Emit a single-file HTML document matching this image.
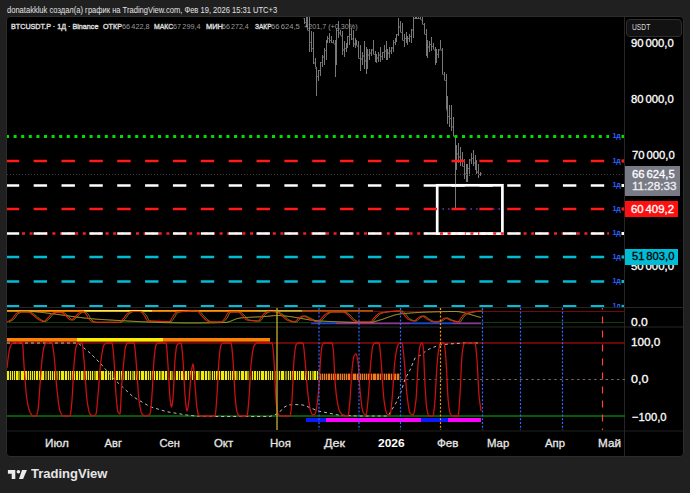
<!DOCTYPE html>
<html><head><meta charset="utf-8"><style>
*{margin:0;padding:0;box-sizing:border-box}
body{width:690px;height:493px;background:#202020;overflow:hidden;position:relative;font-family:"Liberation Sans",sans-serif;color:#fff}
.chart{position:absolute;left:6px;top:16px;width:678px;height:441px;background:#000;border:1px solid #2c2c2c;border-radius:4px}
.tx{position:absolute;white-space:pre;line-height:1;transform-origin:0 0}
.box{position:absolute;left:625px}
</style></head><body>
<div class="chart"></div>
<svg width="690" height="493" style="position:absolute;left:0;top:0">
<defs><clipPath id="main"><rect x="7" y="17" width="618" height="290"/></clipPath>
<clipPath id="p1"><rect x="7" y="308" width="618" height="19"/></clipPath>
<clipPath id="p2"><rect x="7" y="328" width="618" height="102"/></clipPath></defs>
<g clip-path="url(#main)">
<rect x="437.2" y="185.3" width="65.2" height="48.3" fill="none" stroke="#ffffff" stroke-width="2.7"/>
<path d="M304.5 18V24M303.5 18.5h1M304.5 22.5h1M306.5 17V27M305.5 22.5h1M306.5 24.5h1M307.5 17V30M306.5 24.5h1M307.5 30.5h1M309.5 17V52M308.5 30.5h1M309.5 42.5h1M311.5 31V52M310.5 42.5h1M311.5 48.5h1M313.5 32V64M312.5 48.5h1M313.5 62.5h1M315.5 58V67M314.5 63.5h1M315.5 67.5h1M316.5 67V96M315.5 68.5h1M316.5 76.5h1M318.5 70V81M317.5 76.5h1M318.5 70.5h1M320.5 62V76M319.5 70.5h1M320.5 62.5h1M322.5 55V67M321.5 62.5h1M322.5 56.5h1M324.5 48V65M323.5 57.5h1M324.5 50.5h1M326.5 40V60M325.5 50.5h1M326.5 40.5h1M327.5 36V43M326.5 40.5h1M327.5 38.5h1M329.5 33V43M328.5 38.5h1M329.5 40.5h1M331.5 36V43M330.5 40.5h1M331.5 42.5h1M333.5 40V43M332.5 42.5h1M333.5 43.5h1M335.5 40V77M334.5 44.5h1M335.5 46.5h1M336.5 28V65M335.5 47.5h1M336.5 30.5h1M338.5 21V38M337.5 30.5h1M338.5 32.5h1M340.5 30V35M339.5 33.5h1M340.5 35.5h1M342.5 31V55M341.5 36.5h1M342.5 49.5h1M344.5 41V57M343.5 50.5h1M344.5 48.5h1M346.5 43V52M345.5 48.5h1M346.5 43.5h1M347.5 36V48M346.5 44.5h1M347.5 36.5h1M349.5 19V45M348.5 36.5h1M349.5 34.5h1M351.5 28V40M350.5 34.5h1M351.5 38.5h1M353.5 30V47M352.5 39.5h1M353.5 43.5h1M355.5 38V48M354.5 44.5h1M355.5 42.5h1M356.5 40V45M355.5 43.5h1M356.5 45.5h1M358.5 41V58M357.5 46.5h1M358.5 58.5h1M360.5 45V71M359.5 58.5h1M360.5 58.5h1M362.5 52V65M361.5 59.5h1M362.5 55.5h1M364.5 41V69M363.5 56.5h1M364.5 60.5h1M366.5 47V74M365.5 61.5h1M366.5 59.5h1M367.5 49V69M366.5 60.5h1M367.5 54.5h1M369.5 49V60M368.5 55.5h1M369.5 52.5h1M371.5 49V56M370.5 53.5h1M371.5 49.5h1M373.5 40V54M372.5 50.5h1M373.5 54.5h1M375.5 51V62M374.5 54.5h1M375.5 58.5h1M376.5 54V63M375.5 59.5h1M376.5 57.5h1M378.5 52V62M377.5 58.5h1M378.5 54.5h1M380.5 47V62M379.5 55.5h1M380.5 56.5h1M382.5 52V60M381.5 56.5h1M382.5 52.5h1M384.5 45V58M383.5 52.5h1M384.5 50.5h1M386.5 41V60M385.5 51.5h1M386.5 54.5h1M387.5 49V60M386.5 55.5h1M387.5 52.5h1M389.5 47V58M388.5 53.5h1M389.5 50.5h1M391.5 47V54M390.5 51.5h1M391.5 47.5h1M393.5 40V52M392.5 48.5h1M393.5 42.5h1M395.5 38V45M394.5 42.5h1M395.5 38.5h1M396.5 34V42M395.5 38.5h1M396.5 34.5h1M398.5 18V36M397.5 34.5h1M398.5 26.5h1M400.5 21V32M399.5 27.5h1M400.5 32.5h1M402.5 23V40M401.5 32.5h1M402.5 40.5h1M404.5 34V47M403.5 40.5h1M404.5 38.5h1M406.5 32V43M405.5 38.5h1M406.5 40.5h1M407.5 36V45M406.5 41.5h1M407.5 38.5h1M409.5 34V42M408.5 38.5h1M409.5 36.5h1M411.5 29V43M410.5 36.5h1M411.5 29.5h1M413.5 17V38M412.5 30.5h1M413.5 18.5h1M415.5 17V19M414.5 18.5h1M415.5 18.5h1M416.5 17V19M415.5 18.5h1M416.5 18.5h1M418.5 17V19M417.5 18.5h1M418.5 18.5h1M420.5 17V19M419.5 18.5h1M420.5 19.5h1M422.5 17V24M421.5 20.5h1M422.5 24.5h1M424.5 23V34M423.5 24.5h1M424.5 34.5h1M426.5 29V56M425.5 34.5h1M426.5 49.5h1M427.5 40V58M426.5 50.5h1M427.5 46.5h1M429.5 41V52M428.5 47.5h1M429.5 44.5h1M431.5 37V51M430.5 44.5h1M431.5 46.5h1M433.5 43V49M432.5 46.5h1M433.5 49.5h1M435.5 47V65M434.5 50.5h1M435.5 56.5h1M436.5 49V63M435.5 56.5h1M436.5 54.5h1M438.5 49V58M437.5 54.5h1M438.5 49.5h1M440.5 40V49M439.5 50.5h1M440.5 49.5h1M442.5 48V74M441.5 50.5h1M442.5 74.5h1M444.5 72V80M443.5 74.5h1M444.5 80.5h1M446.5 74V109M445.5 80.5h1M446.5 109.5h1M447.5 96V124M446.5 110.5h1M447.5 116.5h1M449.5 105V127M448.5 116.5h1M449.5 118.5h1M451.5 105V131M450.5 118.5h1M451.5 126.5h1M453.5 117V136M452.5 127.5h1M453.5 136.5h1M455.5 136V210M454.5 136.5h1M455.5 158.5h1M456.5 145V170M455.5 158.5h1M456.5 153.5h1M458.5 143V163M457.5 154.5h1M458.5 156.5h1M460.5 147V166M459.5 157.5h1M460.5 159.5h1M462.5 152V166M461.5 160.5h1M462.5 166.5h1M464.5 159V179M463.5 166.5h1M464.5 173.5h1M466.5 164V182M465.5 174.5h1M466.5 173.5h1M467.5 164V182M466.5 174.5h1M467.5 168.5h1M469.5 159V176M468.5 168.5h1M469.5 159.5h1M471.5 153V164M470.5 160.5h1M471.5 158.5h1M473.5 150V166M472.5 158.5h1M473.5 162.5h1M475.5 155V170M474.5 163.5h1M475.5 167.5h1M476.5 160V174M475.5 168.5h1M476.5 171.5h1M478.5 164V178M477.5 172.5h1M478.5 174.5h1M480.5 172V176M479.5 174.5h1M480.5 173.5h1" stroke="#787878" stroke-width="1" fill="none"/>
<line x1="7" y1="174.5" x2="625" y2="174.5" stroke="#3a3a3a" stroke-width="1" stroke-dasharray="1 2" stroke-dashoffset="0"/><line x1="6" y1="136.5" x2="625" y2="136.5" stroke="#00e000" stroke-width="3" stroke-dasharray="3 4.6" stroke-dashoffset="0"/><line x1="7" y1="161" x2="625" y2="161" stroke="#ff1a1a" stroke-width="2.6" stroke-dasharray="13.4 14.457" stroke-dashoffset="1.2"/><line x1="442.4" y1="209" x2="502" y2="209" stroke="#7b2fbf" stroke-width="1.5" stroke-dasharray="1.6 4" stroke-dashoffset="0"/><line x1="7" y1="185.5" x2="625" y2="185.5" stroke="#ffffff" stroke-width="2.6" stroke-dasharray="13.4 14.457" stroke-dashoffset="1.2"/><line x1="7" y1="209" x2="625" y2="209" stroke="#ff1a1a" stroke-width="2.6" stroke-dasharray="13.4 14.457" stroke-dashoffset="1.2"/><line x1="22" y1="233.5" x2="625" y2="233.5" stroke="#ff1a1a" stroke-width="2.6" stroke-dasharray="3 4.6" stroke-dashoffset="0"/><line x1="7" y1="233.5" x2="625" y2="233.5" stroke="#ffffff" stroke-width="2.6" stroke-dasharray="13.4 14.457" stroke-dashoffset="1.2"/><line x1="7" y1="257" x2="625" y2="257" stroke="#00bcd4" stroke-width="2.6" stroke-dasharray="13.4 14.457" stroke-dashoffset="1.2"/><line x1="7" y1="281.5" x2="625" y2="281.5" stroke="#00bcd4" stroke-width="2.6" stroke-dasharray="13.4 14.457" stroke-dashoffset="1.2"/><line x1="7" y1="306.4" x2="625" y2="306.4" stroke="#00bcd4" stroke-width="2.6" stroke-dasharray="13.4 14.457" stroke-dashoffset="1.2"/>
<rect x="609" y="131.5" width="13" height="10" fill="#000"/><text x="612.4" y="138.2" font-size="7" font-weight="bold" fill="#3060ff" font-family="Liberation Sans">1д</text><rect x="609" y="156" width="13" height="10" fill="#000"/><text x="612.4" y="162.7" font-size="7" font-weight="bold" fill="#3060ff" font-family="Liberation Sans">1д</text><rect x="609" y="180.5" width="13" height="10" fill="#000"/><text x="612.4" y="187.2" font-size="7" font-weight="bold" fill="#3060ff" font-family="Liberation Sans">1д</text><rect x="609" y="204" width="13" height="10" fill="#000"/><text x="612.4" y="210.7" font-size="7" font-weight="bold" fill="#3060ff" font-family="Liberation Sans">1д</text><rect x="609" y="228.5" width="13" height="10" fill="#000"/><text x="612.4" y="235.2" font-size="7" font-weight="bold" fill="#3060ff" font-family="Liberation Sans">1д</text><rect x="609" y="252" width="13" height="10" fill="#000"/><text x="612.4" y="258.7" font-size="7" font-weight="bold" fill="#3060ff" font-family="Liberation Sans">1д</text><rect x="609" y="276.5" width="13" height="10" fill="#000"/><text x="612.4" y="283.2" font-size="7" font-weight="bold" fill="#3060ff" font-family="Liberation Sans">1д</text><rect x="609" y="301.4" width="13" height="10" fill="#000"/><text x="612.4" y="308.09999999999997" font-size="7" font-weight="bold" fill="#3060ff" font-family="Liberation Sans">1д</text><rect x="621.5" y="135.0" width="3" height="3" fill="#00e000"/><rect x="621.5" y="159.5" width="3" height="3" fill="#ff1a1a"/><rect x="621.5" y="184.0" width="3" height="3" fill="#ffffff"/><rect x="621.5" y="207.5" width="3" height="3" fill="#ff1a1a"/><rect x="621.5" y="232.0" width="3" height="3" fill="#ffffff"/><rect x="621.5" y="255.5" width="3" height="3" fill="#00bcd4"/><rect x="621.5" y="280.0" width="3" height="3" fill="#00bcd4"/><rect x="621.5" y="304.9" width="3" height="3" fill="#00bcd4"/>
</g>
<line x1="7" y1="307.5" x2="683" y2="307.5" stroke="#262626" stroke-width="1"/>
<line x1="7" y1="327" x2="683" y2="327" stroke="#262626" stroke-width="1"/>
<line x1="7" y1="431" x2="683" y2="431" stroke="#202020" stroke-width="1"/>
<line x1="624.5" y1="17" x2="624.5" y2="456" stroke="#262626" stroke-width="1"/>
<g clip-path="url(#p1)">
<line x1="7" y1="311.5" x2="625" y2="311.5" stroke="#6e0a0a" stroke-width="1"/>
<line x1="7" y1="322.5" x2="625" y2="322.5" stroke="#0a420a" stroke-width="1"/>
<line x1="7" y1="310.8" x2="84" y2="310.8" stroke="#ff9800" stroke-width="1.8"/>
<line x1="84" y1="310.8" x2="152" y2="310.8" stroke="#ffeb3b" stroke-width="1.8"/>
<line x1="152" y1="310.8" x2="257" y2="310.8" stroke="#ff9800" stroke-width="1.8"/>
<line x1="257" y1="310.8" x2="302" y2="310.8" stroke="#c8b428" stroke-width="1.8"/>
<line x1="302" y1="310.8" x2="373" y2="310.8" stroke="#b4500a" stroke-width="1.8"/>
<line x1="311" y1="323.5" x2="336" y2="323.5" stroke="#1a3cff" stroke-width="1.5"/>
<line x1="336" y1="323.5" x2="410" y2="323.5" stroke="#9c27b0" stroke-width="1.5"/>
<line x1="410" y1="323.5" x2="453" y2="323.5" stroke="#1a3cff" stroke-width="1.5"/>
<line x1="453" y1="323.5" x2="481" y2="323.5" stroke="#9c27b0" stroke-width="1.5"/>
<polyline points="7.0,310.5 7.5,310.5 8.0,310.5 8.5,310.5 9.0,310.6 9.5,310.6 10.0,310.6 10.5,310.6 11.0,310.6 11.5,310.6 12.0,310.6 12.5,310.6 13.0,310.7 13.5,310.7 14.0,310.7 14.5,310.7 15.0,310.7 15.5,310.7 16.0,310.7 16.5,310.8 17.0,310.8 17.5,310.8 18.0,310.8 18.5,310.8 19.0,310.8 19.5,310.8 20.0,310.9 20.5,310.9 21.0,310.9 21.5,310.9 22.0,310.9 22.5,310.9 23.0,311.0 23.5,311.0 24.0,311.0 24.5,311.0 25.0,311.0 25.5,311.1 26.0,311.1 26.5,311.1 27.0,311.1 27.5,311.2 28.0,311.2 28.5,311.2 29.0,311.3 29.5,311.3 30.0,311.3 30.5,311.4 31.0,311.4 31.5,311.4 32.0,311.5 32.5,311.5 33.0,311.6 33.5,311.6 34.0,311.6 34.5,311.7 35.0,311.7 35.5,311.8 36.0,311.8 36.5,311.9 37.0,311.9 37.5,312.0 38.0,312.0 38.5,312.1 39.0,312.1 39.5,312.2 40.0,312.2 40.5,312.3 41.0,312.3 41.5,312.4 42.0,312.4 42.5,312.5 43.0,312.5 43.5,312.6 44.0,312.7 44.5,312.7 45.0,312.8 45.5,312.8 46.0,312.9 46.5,313.0 47.0,313.0 47.5,313.1 48.0,313.1 48.5,313.2 49.0,313.3 49.5,313.3 50.0,313.4 50.5,313.5 51.0,313.5 51.5,313.6 52.0,313.7 52.5,313.7 53.0,313.8 53.5,313.9 54.0,313.9 54.5,314.0 55.0,314.1 55.5,314.1 56.0,314.2 56.5,314.3 57.0,314.3 57.5,314.4 58.0,314.5 58.5,314.5 59.0,314.6 59.5,314.7 60.0,314.7 60.5,314.8 61.0,314.9 61.5,315.0 62.0,315.0 62.5,315.1 63.0,315.2 63.5,315.2 64.0,315.3 64.5,315.4 65.0,315.4 65.5,315.5 66.0,315.6 66.5,315.7 67.0,315.7 67.5,315.8 68.0,315.9 68.5,315.9 69.0,316.0 69.5,316.1 70.0,316.1 70.5,316.2 71.0,316.3 71.5,316.4 72.0,316.4 72.5,316.5 73.0,316.6 73.5,316.6 74.0,316.7 74.5,316.8 75.0,316.8 75.5,316.9 76.0,317.0 76.5,317.0 77.0,317.1 77.5,317.2 78.0,317.2 78.5,317.3 79.0,317.3 79.5,317.4 80.0,317.5 80.5,317.5 81.0,317.6 81.5,317.7 82.0,317.7 82.5,317.8 83.0,317.8 83.5,317.9 84.0,318.0 84.5,318.0 85.0,318.1 85.5,318.1 86.0,318.2 86.5,318.2 87.0,318.3 87.5,318.3 88.0,318.4 88.5,318.4 89.0,318.5 89.5,318.6 90.0,318.6 90.5,318.6 91.0,318.7 91.5,318.7 92.0,318.8 92.5,318.8 93.0,318.9 93.5,318.9 94.0,319.0 94.5,319.0 95.0,319.0 95.5,319.1 96.0,319.1 96.5,319.2 97.0,319.2 97.5,319.2 98.0,319.3 98.5,319.3 99.0,319.3 99.5,319.4 100.0,319.4 100.5,319.4 101.0,319.5 101.5,319.5 102.0,319.5 102.5,319.5 103.0,319.6 103.5,319.6 104.0,319.6 104.5,319.7 105.0,319.7 105.5,319.7 106.0,319.8 106.5,319.8 107.0,319.8 107.5,319.8 108.0,319.9 108.5,319.9 109.0,319.9 109.5,320.0 110.0,320.0 110.5,320.0 111.0,320.1 111.5,320.1 112.0,320.1 112.5,320.1 113.0,320.2 113.5,320.2 114.0,320.2 114.5,320.3 115.0,320.3 115.5,320.3 116.0,320.3 116.5,320.4 117.0,320.4 117.5,320.4 118.0,320.5 118.5,320.5 119.0,320.5 119.5,320.5 120.0,320.6 120.5,320.6 121.0,320.6 121.5,320.7 122.0,320.7 122.5,320.7 123.0,320.7 123.5,320.8 124.0,320.8 124.5,320.8 125.0,320.9 125.5,320.9 126.0,320.9 126.5,320.9 127.0,321.0 127.5,321.0 128.0,321.0 128.5,321.0 129.0,321.1 129.5,321.1 130.0,321.1 130.5,321.2 131.0,321.2 131.5,321.2 132.0,321.2 132.5,321.3 133.0,321.3 133.5,321.3 134.0,321.3 134.5,321.4 135.0,321.4 135.5,321.4 136.0,321.4 136.5,321.5 137.0,321.5 137.5,321.5 138.0,321.5 138.5,321.6 139.0,321.6 139.5,321.6 140.0,321.6 140.5,321.7 141.0,321.7 141.5,321.7 142.0,321.7 142.5,321.8 143.0,321.8 143.5,321.8 144.0,321.8 144.5,321.8 145.0,321.9 145.5,321.9 146.0,321.9 146.5,321.9 147.0,322.0 147.5,322.0 148.0,322.0 148.5,322.0 149.0,322.0 149.5,322.1 150.0,322.1 150.5,322.1 151.0,322.1 151.5,322.1 152.0,322.2 152.5,322.2 153.0,322.2 153.5,322.2 154.0,322.2 154.5,322.3 155.0,322.3 155.5,322.3 156.0,322.3 156.5,322.3 157.0,322.4 157.5,322.4 158.0,322.4 158.5,322.4 159.0,322.4 159.5,322.4 160.0,322.5 160.5,322.5 161.0,322.5 161.5,322.5 162.0,322.5 162.5,322.5 163.0,322.6 163.5,322.6 164.0,322.6 164.5,322.6 165.0,322.6 165.5,322.6 166.0,322.6 166.5,322.7 167.0,322.7 167.5,322.7 168.0,322.7 168.5,322.7 169.0,322.7 169.5,322.7 170.0,322.8 170.5,322.8 171.0,322.8 171.5,322.8 172.0,322.8 172.5,322.8 173.0,322.8 173.5,322.8 174.0,322.8 174.5,322.8 175.0,322.9 175.5,322.9 176.0,322.9 176.5,322.9 177.0,322.9 177.5,322.9 178.0,322.9 178.5,322.9 179.0,322.9 179.5,322.9 180.0,322.9 180.5,322.9 181.0,322.9 181.5,323.0 182.0,323.0 182.5,323.0 183.0,323.0 183.5,323.0 184.0,323.0 184.5,323.0 185.0,323.0 185.5,323.0 186.0,323.0 186.5,323.0 187.0,323.0 187.5,323.0 188.0,323.0 188.5,323.0 189.0,323.0 189.5,323.0 190.0,323.0 190.5,323.0 191.0,323.0 191.5,323.0 192.0,323.0 192.5,323.0 193.0,323.0 193.5,323.0 194.0,323.0 194.5,323.0 195.0,323.0 195.5,323.0 196.0,323.0 196.5,323.0 197.0,323.0 197.5,323.0 198.0,323.0 198.5,323.0 199.0,323.0 199.5,323.0 200.0,323.0 200.5,323.0 201.0,323.0 201.5,323.0 202.0,322.9 202.5,322.9 203.0,322.9 203.5,322.9 204.0,322.9 204.5,322.9 205.0,322.9 205.5,322.9 206.0,322.9 206.5,322.9 207.0,322.9 207.5,322.9 208.0,322.9 208.5,322.9 209.0,322.9 209.5,322.9 210.0,322.8 210.5,322.8 211.0,322.8 211.5,322.8 212.0,322.8 212.5,322.8 213.0,322.8 213.5,322.8 214.0,322.8 214.5,322.8 215.0,322.8 215.5,322.7 216.0,322.7 216.5,322.7 217.0,322.7 217.5,322.7 218.0,322.7 218.5,322.7 219.0,322.7 219.5,322.7 220.0,322.6 220.5,322.6 221.0,322.6 221.5,322.6 222.0,322.6 222.5,322.6 223.0,322.6 223.5,322.5 224.0,322.5 224.5,322.5 225.0,322.5 225.5,322.5 226.0,322.4 226.5,322.4 227.0,322.3 227.5,322.1 228.0,322.0 228.5,321.9 229.0,321.7 229.5,321.6 230.0,321.4 230.5,321.2 231.0,321.0 231.5,320.8 232.0,320.6 232.5,320.4 233.0,320.2 233.5,320.0 234.0,319.8 234.5,319.6 235.0,319.4 235.5,319.2 236.0,319.0 236.5,318.8 237.0,318.7 237.5,318.5 238.0,318.4 238.5,318.3 239.0,318.1 239.5,318.1 240.0,318.0 240.5,317.9 241.0,317.9 241.5,317.8 242.0,317.8 242.5,317.8 243.0,317.7 243.5,317.7 244.0,317.6 244.5,317.6 245.0,317.6 245.5,317.5 246.0,317.5 246.5,317.5 247.0,317.4 247.5,317.4 248.0,317.4 248.5,317.3 249.0,317.3 249.5,317.3 250.0,317.3 250.5,317.2 251.0,317.2 251.5,317.2 252.0,317.2 252.5,317.1 253.0,317.1 253.5,317.1 254.0,317.1 254.5,317.0 255.0,317.0 255.5,317.0 256.0,317.0 256.5,317.0 257.0,316.9 257.5,316.9 258.0,316.9 258.5,316.9 259.0,316.8 259.5,316.8 260.0,316.8 260.5,316.8 261.0,316.7 261.5,316.7 262.0,316.7 262.5,316.7 263.0,316.6 263.5,316.6 264.0,316.6 264.5,316.5 265.0,316.5 265.5,316.5 266.0,316.4 266.5,316.4 267.0,316.3 267.5,316.3 268.0,316.2 268.5,316.2 269.0,316.1 269.5,316.1 270.0,316.0 270.5,316.0 271.0,315.9 271.5,315.9 272.0,315.8 272.5,315.8 273.0,315.7 273.5,315.7 274.0,315.7 274.5,315.6 275.0,315.6 275.5,315.6 276.0,315.5 276.5,315.5 277.0,315.5 277.5,315.5 278.0,315.5 278.5,315.5 279.0,315.5 279.5,315.5 280.0,315.6 280.5,315.6 281.0,315.6 281.5,315.7 282.0,315.7 282.5,315.8 283.0,315.8 283.5,315.9 284.0,315.9 284.5,316.0 285.0,316.0 285.5,316.0 286.0,316.1 286.5,316.1 287.0,316.2 287.5,316.3 288.0,316.3 288.5,316.4 289.0,316.4 289.5,316.5 290.0,316.6 290.5,316.6 291.0,316.7 291.5,316.8 292.0,316.9 292.5,316.9 293.0,317.0 293.5,317.1 294.0,317.2 294.5,317.3 295.0,317.3 295.5,317.4 296.0,317.5 296.5,317.6 297.0,317.7 297.5,317.8 298.0,317.9 298.5,317.9 299.0,318.0 299.5,318.1 300.0,318.2 300.5,318.3 301.0,318.4 301.5,318.5 302.0,318.6 302.5,318.7 303.0,318.8 303.5,318.8 304.0,318.9 304.5,319.0 305.0,319.1 305.5,319.2 306.0,319.3 306.5,319.4 307.0,319.4 307.5,319.5 308.0,319.6 308.5,319.7 309.0,319.8 309.5,319.9 310.0,319.9 310.5,320.0 311.0,320.1 311.5,320.1 312.0,320.2 312.5,320.3 313.0,320.3 313.5,320.4 314.0,320.5 314.5,320.5 315.0,320.6 315.5,320.6 316.0,320.7 316.5,320.7 317.0,320.8 317.5,320.8 318.0,320.9 318.5,320.9 319.0,320.9 319.5,321.0 320.0,321.0 320.5,321.0 321.0,321.1 321.5,321.1 322.0,321.1 322.5,321.1 323.0,321.2 323.5,321.2 324.0,321.2 324.5,321.2 325.0,321.3 325.5,321.3 326.0,321.3 326.5,321.3 327.0,321.3 327.5,321.4 328.0,321.4 328.5,321.4 329.0,321.4 329.5,321.5 330.0,321.5 330.5,321.5 331.0,321.5 331.5,321.6 332.0,321.6 332.5,321.6 333.0,321.6 333.5,321.6 334.0,321.7 334.5,321.7 335.0,321.7 335.5,321.7 336.0,321.7 336.5,321.8 337.0,321.8 337.5,321.8 338.0,321.8 338.5,321.8 339.0,321.9 339.5,321.9 340.0,321.9 340.5,321.9 341.0,321.9 341.5,322.0 342.0,322.0 342.5,322.0 343.0,322.0 343.5,322.0 344.0,322.0 344.5,322.1 345.0,322.1 345.5,322.1 346.0,322.1 346.5,322.1 347.0,322.1 347.5,322.1 348.0,322.2 348.5,322.2 349.0,322.2 349.5,322.2 350.0,322.2 350.5,322.2 351.0,322.2 351.5,322.3 352.0,322.3 352.5,322.3 353.0,322.3 353.5,322.3 354.0,322.3 354.5,322.3 355.0,322.3 355.5,322.3 356.0,322.4 356.5,322.4 357.0,322.4 357.5,322.4 358.0,322.4 358.5,322.4 359.0,322.4 359.5,322.4 360.0,322.4 360.5,322.4 361.0,322.4 361.5,322.4 362.0,322.5 362.5,322.5 363.0,322.5 363.5,322.5 364.0,322.5 364.5,322.5 365.0,322.5 365.5,322.5 366.0,322.5 366.5,322.5 367.0,322.5 367.5,322.5 368.0,322.5 368.5,322.5 369.0,322.5 369.5,322.5 370.0,322.5 370.5,322.5 371.0,322.5 371.5,322.4 372.0,322.3 372.5,322.2 373.0,322.1 373.5,322.0 374.0,321.9 374.5,321.7 375.0,321.6 375.5,321.4 376.0,321.3 376.5,321.1 377.0,320.9 377.5,320.8 378.0,320.6 378.5,320.4 379.0,320.3 379.5,320.1 380.0,320.0 380.5,319.9 381.0,319.7 381.5,319.6 382.0,319.4 382.5,319.3 383.0,319.1 383.5,318.9 384.0,318.8 384.5,318.6 385.0,318.4 385.5,318.2 386.0,318.1 386.5,317.9 387.0,317.7 387.5,317.5 388.0,317.3 388.5,317.1 389.0,317.0 389.5,316.8 390.0,316.6 390.5,316.4 391.0,316.3 391.5,316.1 392.0,315.9 392.5,315.8 393.0,315.6 393.5,315.4 394.0,315.3 394.5,315.1 395.0,315.0 395.5,314.9 396.0,314.7 396.5,314.6 397.0,314.5 397.5,314.4 398.0,314.3 398.5,314.2 399.0,314.1 399.5,314.1 400.0,314.0 400.5,313.9 401.0,313.9 401.5,313.8 402.0,313.8 402.5,313.7 403.0,313.7 403.5,313.6 404.0,313.6 404.5,313.5 405.0,313.5 405.5,313.4 406.0,313.4 406.5,313.3 407.0,313.3 407.5,313.2 408.0,313.2 408.5,313.2 409.0,313.1 409.5,313.1 410.0,313.0 410.5,313.0 411.0,313.0 411.5,312.9 412.0,312.9 412.5,312.9 413.0,312.8 413.5,312.8 414.0,312.8 414.5,312.7 415.0,312.7 415.5,312.7 416.0,312.6 416.5,312.6 417.0,312.6 417.5,312.5 418.0,312.5 418.5,312.5 419.0,312.5 419.5,312.4 420.0,312.4 420.5,312.4 421.0,312.4 421.5,312.3 422.0,312.3 422.5,312.3 423.0,312.3 423.5,312.2 424.0,312.2 424.5,312.2 425.0,312.2 425.5,312.2 426.0,312.1 426.5,312.1 427.0,312.1 427.5,312.1 428.0,312.1 428.5,312.0 429.0,312.0 429.5,312.0 430.0,312.0 430.5,312.0 431.0,312.0 431.5,312.0 432.0,311.9 432.5,311.9 433.0,311.9 433.5,311.9 434.0,311.9 434.5,311.9 435.0,311.9 435.5,311.8 436.0,311.8 436.5,311.8 437.0,311.8 437.5,311.8 438.0,311.8 438.5,311.8 439.0,311.7 439.5,311.7 440.0,311.7 440.5,311.7 441.0,311.7 441.5,311.7 442.0,311.7 442.5,311.7 443.0,311.6 443.5,311.6 444.0,311.6 444.5,311.6 445.0,311.6 445.5,311.6 446.0,311.6 446.5,311.6 447.0,311.6 447.5,311.6 448.0,311.6 448.5,311.5 449.0,311.5 449.5,311.5 450.0,311.5 450.5,311.5 451.0,311.5 451.5,311.5 452.0,311.5 452.5,311.5 453.0,311.5 453.5,311.5 454.0,311.5 454.5,311.5 455.0,311.5 455.5,311.5 456.0,311.5 456.5,311.5 457.0,311.6 457.5,311.6 458.0,311.7 458.5,311.7 459.0,311.8 459.5,311.8 460.0,311.9 460.5,312.0 461.0,312.1 461.5,312.2 462.0,312.3 462.5,312.4 463.0,312.5 463.5,312.6 464.0,312.7 464.5,312.8 465.0,312.9 465.5,313.1 466.0,313.2 466.5,313.3 467.0,313.5 467.5,313.6 468.0,313.8 468.5,313.9 469.0,314.0 469.5,314.2 470.0,314.3 470.5,314.5 471.0,314.6 471.5,314.8 472.0,315.0 472.5,315.1 473.0,315.3 473.5,315.4 474.0,315.6 474.5,315.7 475.0,315.9 475.5,316.0 476.0,316.2 476.5,316.3 477.0,316.5 477.5,316.6 478.0,316.7 478.5,316.9 479.0,317.0 479.5,317.1 480.0,317.3 480.5,317.4 481.0,317.5" fill="none" stroke="#c9b830" stroke-width="1"/>
<polyline points="9.0,322.0 9.5,321.7 10.0,321.4 10.5,321.2 11.0,320.9 11.5,320.6 12.0,320.4 12.5,320.1 13.0,319.7 13.5,319.4 14.0,319.0 14.5,318.5 15.0,317.9 15.5,317.2 16.0,316.4 16.5,315.7 17.0,315.0 17.5,314.4 18.0,314.0 18.5,313.6 19.0,313.3 19.5,312.9 20.0,312.6 20.5,312.4 21.0,312.2 21.5,312.0 22.0,312.0 22.5,312.0 23.0,312.0 23.5,312.0 24.0,312.0 24.5,312.0 25.0,312.0 25.5,312.0 26.0,312.0 26.5,312.0 27.0,312.0 27.5,312.0 28.0,312.0 28.5,312.0 29.0,312.0 29.5,312.0 30.0,312.0 30.5,312.1 31.0,312.2 31.5,312.4 32.0,312.7 32.5,313.1 33.0,313.5 33.5,313.8 34.0,314.2 34.5,314.6 35.0,315.0 35.5,315.4 36.0,315.8 36.5,316.2 37.0,316.6 37.5,317.0 38.0,317.5 38.5,317.9 39.0,318.3 39.5,318.7 40.0,319.0 40.5,319.3 41.0,319.7 41.5,320.0 42.0,320.3 42.5,320.6 43.0,320.9 43.5,321.2 44.0,321.3 44.5,321.5 45.0,321.5 45.5,321.4 46.0,321.3 46.5,321.0 47.0,320.7 47.5,320.3 48.0,319.9 48.5,319.4 49.0,318.9 49.5,318.5 50.0,318.0 50.5,317.5 51.0,316.9 51.5,316.2 52.0,315.6 52.5,314.9 53.0,314.3 53.5,313.8 54.0,313.5 54.5,313.3 55.0,313.0 55.5,312.8 56.0,312.6 56.5,312.5 57.0,312.5 57.5,312.5 58.0,312.5 58.5,312.5 59.0,312.5 59.5,312.5 60.0,312.5 60.5,312.5 61.0,312.5 61.5,312.5 62.0,312.5 62.5,312.5 63.0,312.5 63.5,312.6 64.0,312.8 64.5,313.0 65.0,313.4 65.5,313.8 66.0,314.2 66.5,314.6 67.0,315.0 67.5,315.4 68.0,315.9 68.5,316.4 69.0,316.9 69.5,317.5 70.0,318.0 70.5,318.5 71.0,319.0 71.5,319.4 72.0,319.7 72.5,319.9 73.0,320.0 73.5,319.9 74.0,319.7 74.5,319.4 75.0,318.9 75.5,318.5 76.0,318.0 76.5,317.5 77.0,317.0 77.5,316.5 78.0,316.0 78.5,315.4 79.0,314.8 79.5,314.2 80.0,313.7 80.5,313.3 81.0,313.0 81.5,312.8 82.0,312.6 82.5,312.4 83.0,312.3 83.5,312.2 84.0,312.1 84.5,312.0 85.0,312.0 85.5,312.1 86.0,312.3 86.5,312.6 87.0,313.1 87.5,313.5 88.0,314.0 88.5,314.6 89.0,315.5 89.5,316.4 90.0,317.4 90.5,318.3 91.0,319.0 91.5,319.5 92.0,320.1 92.5,320.5 93.0,320.9 93.5,321.3 94.0,321.5 94.5,321.7 95.0,321.9 95.5,322.1 96.0,322.2 96.5,322.3 97.0,322.3 97.5,322.3 98.0,322.3 98.5,322.3 99.0,322.3 99.5,322.3 100.0,322.3 100.5,322.3 101.0,322.3 101.5,322.3 102.0,322.3 102.5,322.3 103.0,322.3 103.5,322.3 104.0,322.3 104.5,322.3 105.0,322.3 105.5,322.3 106.0,322.3 106.5,322.3 107.0,322.3 107.5,322.3 108.0,322.3 108.5,322.3 109.0,322.3 109.5,322.3 110.0,322.3 110.5,322.3 111.0,322.3 111.5,322.3 112.0,322.3 112.5,322.3 113.0,322.3 113.5,322.3 114.0,322.3 114.5,322.3 115.0,322.3 115.5,322.3 116.0,322.3 116.5,322.3 117.0,322.3 117.5,322.3 118.0,322.3 118.5,322.3 119.0,322.3 119.5,322.3 120.0,322.3 120.5,322.3 121.0,322.3 121.5,322.2 122.0,322.0 122.5,321.6 123.0,321.1 123.5,320.6 124.0,320.1 124.5,319.5 125.0,319.0 125.5,318.4 126.0,317.8 126.5,317.1 127.0,316.4 127.5,315.7 128.0,315.0 128.5,314.4 129.0,314.0 129.5,313.6 130.0,313.3 130.5,312.9 131.0,312.6 131.5,312.3 132.0,312.0 132.5,311.8 133.0,311.6 133.5,311.5 134.0,311.5 134.5,311.5 135.0,311.5 135.5,311.5 136.0,311.5 136.5,311.5 137.0,311.5 137.5,311.5 138.0,311.5 138.5,311.5 139.0,311.5 139.5,311.5 140.0,311.5 140.5,311.5 141.0,311.5 141.5,311.5 142.0,311.5 142.5,311.6 143.0,311.8 143.5,312.2 144.0,312.7 144.5,313.2 145.0,313.8 145.5,314.4 146.0,315.0 146.5,315.7 147.0,316.5 147.5,317.5 148.0,318.5 148.5,319.5 149.0,320.2 149.5,320.8 150.0,321.0 150.5,321.0 151.0,321.1 151.5,321.1 152.0,321.1 152.5,321.1 153.0,321.2 153.5,321.2 154.0,321.2 154.5,321.2 155.0,321.2 155.5,321.3 156.0,321.3 156.5,321.3 157.0,321.3 157.5,321.3 158.0,321.3 158.5,321.4 159.0,321.4 159.5,321.4 160.0,321.4 160.5,321.4 161.0,321.4 161.5,321.4 162.0,321.4 162.5,321.4 163.0,321.5 163.5,321.5 164.0,321.5 164.5,321.5 165.0,321.5 165.5,321.5 166.0,321.5 166.5,321.5 167.0,321.5 167.5,321.5 168.0,321.5 168.5,321.5 169.0,321.5 169.5,321.5 170.0,321.5 170.5,321.5 171.0,321.5 171.5,321.3 172.0,320.9 172.5,320.2 173.0,319.5 173.5,318.7 174.0,318.0 174.5,317.3 175.0,316.5 175.5,315.6 176.0,314.8 176.5,314.1 177.0,313.5 177.5,313.0 178.0,312.5 178.5,312.2 179.0,312.0 179.5,311.9 180.0,311.9 180.5,311.8 181.0,311.8 181.5,311.7 182.0,311.7 182.5,311.6 183.0,311.6 183.5,311.5 184.0,311.5 184.5,311.5 185.0,311.4 185.5,311.4 186.0,311.4 186.5,311.3 187.0,311.3 187.5,311.3 188.0,311.2 188.5,311.2 189.0,311.2 189.5,311.2 190.0,311.2 190.5,311.1 191.0,311.1 191.5,311.1 192.0,311.1 192.5,311.1 193.0,311.1 193.5,311.1 194.0,311.0 194.5,311.0 195.0,311.0 195.5,311.0 196.0,311.0 196.5,311.0 197.0,311.0 197.5,311.0 198.0,311.0 198.5,311.0 199.0,311.0 199.5,311.1 200.0,311.4 200.5,311.9 201.0,312.5 201.5,313.1 202.0,313.8 202.5,314.4 203.0,315.0 203.5,315.5 204.0,316.1 204.5,316.6 205.0,317.2 205.5,317.7 206.0,318.2 206.5,318.8 207.0,319.2 207.5,319.6 208.0,320.0 208.5,320.3 209.0,320.7 209.5,321.0 210.0,321.3 210.5,321.6 211.0,321.8 211.5,322.0 212.0,322.0 212.5,322.0 213.0,322.0 213.5,322.0 214.0,322.0 214.5,322.0 215.0,322.0 215.5,322.0 216.0,322.0 216.5,322.0 217.0,322.0 217.5,322.0 218.0,322.0 218.5,322.0 219.0,322.0 219.5,322.0 220.0,322.0 220.5,322.0 221.0,322.0 221.5,322.0 222.0,322.0 222.5,322.0 223.0,322.0 223.5,321.9 224.0,321.6 224.5,321.2 225.0,320.6 225.5,320.0 226.0,319.3 226.5,318.7 227.0,318.0 227.5,317.2 228.0,316.3 228.5,315.3 229.0,314.3 229.5,313.5 230.0,313.0 230.5,312.6 231.0,312.3 231.5,312.1 232.0,312.0 232.5,312.0 233.0,312.0 233.5,312.0 234.0,312.0 234.5,312.0 235.0,312.0 235.5,312.0 236.0,312.0 236.5,312.0 237.0,312.0 237.5,312.0 238.0,312.0 238.5,312.0 239.0,312.0 239.5,312.0 240.0,312.0 240.5,312.1 241.0,312.3 241.5,312.6 242.0,313.1 242.5,313.6 243.0,314.1 243.5,314.5 244.0,315.0 244.5,315.5 245.0,316.0 245.5,316.6 246.0,317.3 246.5,317.9 247.0,318.5 247.5,319.1 248.0,319.5 248.5,319.8 249.0,320.0 249.5,320.1 250.0,320.2 250.5,320.3 251.0,320.3 251.5,320.4 252.0,320.5 252.5,320.5 253.0,320.6 253.5,320.7 254.0,320.7 254.5,320.8 255.0,320.8 255.5,320.8 256.0,320.9 256.5,320.9 257.0,320.9 257.5,321.0 258.0,321.0 258.5,321.0 259.0,321.0 259.5,321.0 260.0,321.0 260.5,320.8 261.0,320.4 261.5,319.8 262.0,319.1 262.5,318.2 263.0,317.4 263.5,316.6 264.0,316.0 264.5,315.4 265.0,314.8 265.5,314.3 266.0,313.7 266.5,313.3 267.0,313.0 267.5,312.8 268.0,312.5 268.5,312.3 269.0,312.1 269.5,311.9 270.0,311.8 270.5,311.7 271.0,311.6 271.5,311.5 272.0,311.5 272.5,311.5 273.0,311.5 273.5,311.5 274.0,311.6 274.5,311.6 275.0,311.6 275.5,311.7 276.0,311.7 276.5,311.8 277.0,311.9 277.5,311.9 278.0,312.0 278.5,312.1 279.0,312.3 279.5,312.5 280.0,312.8 280.5,313.1 281.0,313.4 281.5,313.7 282.0,314.0 282.5,314.3 283.0,314.7 283.5,315.2 284.0,315.6 284.5,316.1 285.0,316.7 285.5,317.2 286.0,317.7 286.5,318.2 287.0,318.6 287.5,319.1 288.0,319.4 288.5,319.7 289.0,320.0 289.5,320.2 290.0,320.4 290.5,320.6 291.0,320.8 291.5,321.0 292.0,321.2 292.5,321.4 293.0,321.5 293.5,321.7 294.0,321.8 294.5,321.9 295.0,321.9 295.5,322.0 296.0,322.0 296.5,321.9 297.0,321.7 297.5,321.3 298.0,320.9 298.5,320.4 299.0,319.8 299.5,319.3 300.0,318.8 300.5,318.4 301.0,318.0 301.5,317.7 302.0,317.3 302.5,317.0 303.0,316.7 303.5,316.4 304.0,316.2 304.5,316.1 305.0,316.0 305.5,316.0 306.0,316.1 306.5,316.3 307.0,316.5 307.5,316.8 308.0,317.0 308.5,317.3 309.0,317.5 309.5,317.8 310.0,318.0 310.5,318.2 311.0,318.4 311.5,318.7 312.0,318.9 312.5,319.2 313.0,319.5 313.5,319.7 314.0,320.0 314.5,320.2 315.0,320.5 315.5,320.7 316.0,321.0 316.5,321.2 317.0,321.4 317.5,321.6 318.0,321.7 318.5,321.8 319.0,321.9 319.5,322.0 320.0,322.0 320.5,321.8 321.0,321.4 321.5,320.9 322.0,320.2 322.5,319.6 323.0,319.0 323.5,318.5 324.0,317.9 324.5,317.4 325.0,316.8 325.5,316.2 326.0,315.7 326.5,315.2 327.0,314.7 327.5,314.3 328.0,314.0 328.5,313.7 329.0,313.4 329.5,313.1 330.0,312.9 330.5,312.6 331.0,312.4 331.5,312.3 332.0,312.1 332.5,312.0 333.0,312.0 333.5,312.0 334.0,312.0 334.5,312.0 335.0,312.0 335.5,312.0 336.0,312.0 336.5,312.0 337.0,312.0 337.5,312.0 338.0,312.0 338.5,312.0 339.0,312.0 339.5,312.0 340.0,312.0 340.5,312.0 341.0,312.0 341.5,312.0 342.0,312.0 342.5,312.0 343.0,312.0 343.5,312.0 344.0,312.0 344.5,312.0 345.0,312.0 345.5,312.1 346.0,312.2 346.5,312.4 347.0,312.7 347.5,313.0 348.0,313.4 348.5,313.8 349.0,314.2 349.5,314.6 350.0,315.0 350.5,315.4 351.0,315.9 351.5,316.5 352.0,317.0 352.5,317.6 353.0,318.2 353.5,318.7 354.0,319.2 354.5,319.7 355.0,320.0 355.5,320.3 356.0,320.6 356.5,320.9 357.0,321.1 357.5,321.4 358.0,321.6 358.5,321.7 359.0,321.9 359.5,322.0 360.0,322.0 360.5,322.0 361.0,322.0 361.5,322.0 362.0,322.0 362.5,322.0 363.0,322.0 363.5,322.0 364.0,322.0 364.5,322.0 365.0,322.0 365.5,322.0 366.0,322.0 366.5,322.0 367.0,322.0 367.5,322.0 368.0,322.0 368.5,322.0 369.0,322.0 369.5,322.0 370.0,322.0 370.5,322.0 371.0,322.0 371.5,322.0 372.0,322.0 372.5,321.9 373.0,321.5 373.5,321.1 374.0,320.5 374.5,319.8 375.0,319.1 375.5,318.5 376.0,318.0 376.5,317.5 377.0,317.0 377.5,316.5 378.0,316.0 378.5,315.5 379.0,315.0 379.5,314.5 380.0,314.1 380.5,313.7 381.0,313.4 381.5,313.2 382.0,313.0 382.5,312.9 383.0,312.8 383.5,312.7 384.0,312.6 384.5,312.5 385.0,312.4 385.5,312.3 386.0,312.3 386.5,312.2 387.0,312.1 387.5,312.0 388.0,312.0 388.5,311.9 389.0,311.8 389.5,311.8 390.0,311.7 390.5,311.6 391.0,311.6 391.5,311.5 392.0,311.5 392.5,311.4 393.0,311.4 393.5,311.3 394.0,311.3 394.5,311.3 395.0,311.2 395.5,311.2 396.0,311.2 396.5,311.1 397.0,311.1 397.5,311.1 398.0,311.1 398.5,311.1 399.0,311.0 399.5,311.0 400.0,311.0 400.5,311.0 401.0,311.0 401.5,311.0 402.0,311.0 402.5,311.1 403.0,311.4 403.5,311.8 404.0,312.3 404.5,312.9 405.0,313.5 405.5,314.0 406.0,314.5 406.5,315.1 407.0,315.8 407.5,316.4 408.0,317.1 408.5,317.7 409.0,318.2 409.5,318.7 410.0,319.0 410.5,319.3 411.0,319.5 411.5,319.8 412.0,320.0 412.5,320.2 413.0,320.4 413.5,320.6 414.0,320.7 414.5,320.8 415.0,320.9 415.5,321.0 416.0,321.0 416.5,320.9 417.0,320.6 417.5,320.3 418.0,319.8 418.5,319.3 419.0,318.8 419.5,318.4 420.0,318.0 420.5,317.7 421.0,317.4 421.5,317.0 422.0,316.7 422.5,316.4 423.0,316.2 423.5,316.1 424.0,316.0 424.5,316.1 425.0,316.2 425.5,316.5 426.0,316.8 426.5,317.2 427.0,317.6 427.5,318.0 428.0,318.4 428.5,318.7 429.0,319.0 429.5,319.3 430.0,319.5 430.5,319.8 431.0,320.1 431.5,320.4 432.0,320.7 432.5,320.9 433.0,321.2 433.5,321.4 434.0,321.6 434.5,321.8 435.0,321.9 435.5,322.0 436.0,322.0 436.5,322.0 437.0,322.0 437.5,321.9 438.0,321.9 438.5,321.8 439.0,321.7 439.5,321.6 440.0,321.5 440.5,321.4 441.0,321.3 441.5,321.1 442.0,321.0 442.5,320.8 443.0,320.5 443.5,320.2 444.0,319.8 444.5,319.3 445.0,318.9 445.5,318.6 446.0,318.3 446.5,318.1 447.0,318.0 447.5,318.0 448.0,318.2 448.5,318.3 449.0,318.6 449.5,318.8 450.0,319.1 450.5,319.3 451.0,319.6 451.5,319.8 452.0,320.0 452.5,320.2 453.0,320.3 453.5,320.5 454.0,320.7 454.5,320.8 455.0,321.0 455.5,321.2 456.0,321.3 456.5,321.5 457.0,321.6 457.5,321.7 458.0,321.8 458.5,321.9 459.0,321.9 459.5,322.0 460.0,322.0 460.5,321.8 461.0,321.2 461.5,320.4 462.0,319.5 462.5,318.7 463.0,318.0 463.5,317.4 464.0,316.8 464.5,316.2 465.0,315.7 465.5,315.1 466.0,314.7 466.5,314.3 467.0,314.0 467.5,313.8 468.0,313.6 468.5,313.4 469.0,313.3 469.5,313.1 470.0,313.0 470.5,312.9 471.0,312.7 471.5,312.6 472.0,312.5 472.5,312.4 473.0,312.2 473.5,312.1 474.0,312.0 474.5,311.9 475.0,311.8 475.5,311.7 476.0,311.6 476.5,311.6 477.0,311.5 477.5,311.4 478.0,311.4 478.5,311.3 479.0,311.3 479.5,311.3 480.0,311.2 480.5,311.2 481.0,311.2 481.5,311.1 482.0,311.1 482.5,311.0 483.0,311.0" fill="none" stroke="#6f9a18" stroke-width="1"/>
<polyline points="7.0,322.0 7.5,321.7 8.0,321.4 8.5,321.2 9.0,320.9 9.5,320.6 10.0,320.4 10.5,320.1 11.0,319.7 11.5,319.4 12.0,319.0 12.5,318.5 13.0,317.9 13.5,317.2 14.0,316.4 14.5,315.7 15.0,315.0 15.5,314.4 16.0,314.0 16.5,313.6 17.0,313.3 17.5,312.9 18.0,312.6 18.5,312.4 19.0,312.2 19.5,312.0 20.0,312.0 20.5,312.0 21.0,312.0 21.5,312.0 22.0,312.0 22.5,312.0 23.0,312.0 23.5,312.0 24.0,312.0 24.5,312.0 25.0,312.0 25.5,312.0 26.0,312.0 26.5,312.0 27.0,312.0 27.5,312.0 28.0,312.0 28.5,312.1 29.0,312.2 29.5,312.4 30.0,312.7 30.5,313.1 31.0,313.5 31.5,313.8 32.0,314.2 32.5,314.6 33.0,315.0 33.5,315.4 34.0,315.8 34.5,316.2 35.0,316.6 35.5,317.0 36.0,317.5 36.5,317.9 37.0,318.3 37.5,318.7 38.0,319.0 38.5,319.3 39.0,319.7 39.5,320.0 40.0,320.3 40.5,320.6 41.0,320.9 41.5,321.2 42.0,321.3 42.5,321.5 43.0,321.5 43.5,321.4 44.0,321.3 44.5,321.0 45.0,320.7 45.5,320.3 46.0,319.9 46.5,319.4 47.0,318.9 47.5,318.5 48.0,318.0 48.5,317.5 49.0,316.9 49.5,316.2 50.0,315.6 50.5,314.9 51.0,314.3 51.5,313.8 52.0,313.5 52.5,313.3 53.0,313.0 53.5,312.8 54.0,312.6 54.5,312.5 55.0,312.5 55.5,312.5 56.0,312.5 56.5,312.5 57.0,312.5 57.5,312.5 58.0,312.5 58.5,312.5 59.0,312.5 59.5,312.5 60.0,312.5 60.5,312.5 61.0,312.5 61.5,312.6 62.0,312.8 62.5,313.0 63.0,313.4 63.5,313.8 64.0,314.2 64.5,314.6 65.0,315.0 65.5,315.4 66.0,315.9 66.5,316.4 67.0,316.9 67.5,317.5 68.0,318.0 68.5,318.5 69.0,319.0 69.5,319.4 70.0,319.7 70.5,319.9 71.0,320.0 71.5,319.9 72.0,319.7 72.5,319.4 73.0,318.9 73.5,318.5 74.0,318.0 74.5,317.5 75.0,317.0 75.5,316.5 76.0,316.0 76.5,315.4 77.0,314.8 77.5,314.2 78.0,313.7 78.5,313.3 79.0,313.0 79.5,312.8 80.0,312.6 80.5,312.4 81.0,312.3 81.5,312.2 82.0,312.1 82.5,312.0 83.0,312.0 83.5,312.1 84.0,312.3 84.5,312.6 85.0,313.1 85.5,313.5 86.0,314.0 86.5,314.6 87.0,315.5 87.5,316.4 88.0,317.4 88.5,318.3 89.0,319.0 89.5,319.5 90.0,320.1 90.5,320.5 91.0,320.9 91.5,321.3 92.0,321.5 92.5,321.7 93.0,321.9 93.5,322.1 94.0,322.2 94.5,322.3 95.0,322.3 95.5,322.3 96.0,322.3 96.5,322.3 97.0,322.3 97.5,322.3 98.0,322.3 98.5,322.3 99.0,322.3 99.5,322.3 100.0,322.3 100.5,322.3 101.0,322.3 101.5,322.3 102.0,322.3 102.5,322.3 103.0,322.3 103.5,322.3 104.0,322.3 104.5,322.3 105.0,322.3 105.5,322.3 106.0,322.3 106.5,322.3 107.0,322.3 107.5,322.3 108.0,322.3 108.5,322.3 109.0,322.3 109.5,322.3 110.0,322.3 110.5,322.3 111.0,322.3 111.5,322.3 112.0,322.3 112.5,322.3 113.0,322.3 113.5,322.3 114.0,322.3 114.5,322.3 115.0,322.3 115.5,322.3 116.0,322.3 116.5,322.3 117.0,322.3 117.5,322.3 118.0,322.3 118.5,322.3 119.0,322.3 119.5,322.2 120.0,322.0 120.5,321.6 121.0,321.1 121.5,320.6 122.0,320.1 122.5,319.5 123.0,319.0 123.5,318.4 124.0,317.8 124.5,317.1 125.0,316.4 125.5,315.7 126.0,315.0 126.5,314.4 127.0,314.0 127.5,313.6 128.0,313.3 128.5,312.9 129.0,312.6 129.5,312.3 130.0,312.0 130.5,311.8 131.0,311.6 131.5,311.5 132.0,311.5 132.5,311.5 133.0,311.5 133.5,311.5 134.0,311.5 134.5,311.5 135.0,311.5 135.5,311.5 136.0,311.5 136.5,311.5 137.0,311.5 137.5,311.5 138.0,311.5 138.5,311.5 139.0,311.5 139.5,311.5 140.0,311.5 140.5,311.6 141.0,311.8 141.5,312.2 142.0,312.7 142.5,313.2 143.0,313.8 143.5,314.4 144.0,315.0 144.5,315.7 145.0,316.5 145.5,317.5 146.0,318.5 146.5,319.5 147.0,320.2 147.5,320.8 148.0,321.0 148.5,321.0 149.0,321.1 149.5,321.1 150.0,321.1 150.5,321.1 151.0,321.2 151.5,321.2 152.0,321.2 152.5,321.2 153.0,321.2 153.5,321.3 154.0,321.3 154.5,321.3 155.0,321.3 155.5,321.3 156.0,321.3 156.5,321.4 157.0,321.4 157.5,321.4 158.0,321.4 158.5,321.4 159.0,321.4 159.5,321.4 160.0,321.4 160.5,321.4 161.0,321.5 161.5,321.5 162.0,321.5 162.5,321.5 163.0,321.5 163.5,321.5 164.0,321.5 164.5,321.5 165.0,321.5 165.5,321.5 166.0,321.5 166.5,321.5 167.0,321.5 167.5,321.5 168.0,321.5 168.5,321.5 169.0,321.5 169.5,321.3 170.0,320.9 170.5,320.2 171.0,319.5 171.5,318.7 172.0,318.0 172.5,317.3 173.0,316.5 173.5,315.6 174.0,314.8 174.5,314.1 175.0,313.5 175.5,313.0 176.0,312.5 176.5,312.2 177.0,312.0 177.5,311.9 178.0,311.9 178.5,311.8 179.0,311.8 179.5,311.7 180.0,311.7 180.5,311.6 181.0,311.6 181.5,311.5 182.0,311.5 182.5,311.5 183.0,311.4 183.5,311.4 184.0,311.4 184.5,311.3 185.0,311.3 185.5,311.3 186.0,311.2 186.5,311.2 187.0,311.2 187.5,311.2 188.0,311.2 188.5,311.1 189.0,311.1 189.5,311.1 190.0,311.1 190.5,311.1 191.0,311.1 191.5,311.1 192.0,311.0 192.5,311.0 193.0,311.0 193.5,311.0 194.0,311.0 194.5,311.0 195.0,311.0 195.5,311.0 196.0,311.0 196.5,311.0 197.0,311.0 197.5,311.1 198.0,311.4 198.5,311.9 199.0,312.5 199.5,313.1 200.0,313.8 200.5,314.4 201.0,315.0 201.5,315.5 202.0,316.1 202.5,316.6 203.0,317.2 203.5,317.7 204.0,318.2 204.5,318.8 205.0,319.2 205.5,319.6 206.0,320.0 206.5,320.3 207.0,320.7 207.5,321.0 208.0,321.3 208.5,321.6 209.0,321.8 209.5,322.0 210.0,322.0 210.5,322.0 211.0,322.0 211.5,322.0 212.0,322.0 212.5,322.0 213.0,322.0 213.5,322.0 214.0,322.0 214.5,322.0 215.0,322.0 215.5,322.0 216.0,322.0 216.5,322.0 217.0,322.0 217.5,322.0 218.0,322.0 218.5,322.0 219.0,322.0 219.5,322.0 220.0,322.0 220.5,322.0 221.0,322.0 221.5,321.9 222.0,321.6 222.5,321.2 223.0,320.6 223.5,320.0 224.0,319.3 224.5,318.7 225.0,318.0 225.5,317.2 226.0,316.3 226.5,315.3 227.0,314.3 227.5,313.5 228.0,313.0 228.5,312.6 229.0,312.3 229.5,312.1 230.0,312.0 230.5,312.0 231.0,312.0 231.5,312.0 232.0,312.0 232.5,312.0 233.0,312.0 233.5,312.0 234.0,312.0 234.5,312.0 235.0,312.0 235.5,312.0 236.0,312.0 236.5,312.0 237.0,312.0 237.5,312.0 238.0,312.0 238.5,312.1 239.0,312.3 239.5,312.6 240.0,313.1 240.5,313.6 241.0,314.1 241.5,314.5 242.0,315.0 242.5,315.5 243.0,316.0 243.5,316.6 244.0,317.3 244.5,317.9 245.0,318.5 245.5,319.1 246.0,319.5 246.5,319.8 247.0,320.0 247.5,320.1 248.0,320.2 248.5,320.3 249.0,320.3 249.5,320.4 250.0,320.5 250.5,320.5 251.0,320.6 251.5,320.7 252.0,320.7 252.5,320.8 253.0,320.8 253.5,320.8 254.0,320.9 254.5,320.9 255.0,320.9 255.5,321.0 256.0,321.0 256.5,321.0 257.0,321.0 257.5,321.0 258.0,321.0 258.5,320.8 259.0,320.4 259.5,319.8 260.0,319.1 260.5,318.2 261.0,317.4 261.5,316.6 262.0,316.0 262.5,315.4 263.0,314.8 263.5,314.3 264.0,313.7 264.5,313.3 265.0,313.0 265.5,312.8 266.0,312.5 266.5,312.3 267.0,312.1 267.5,311.9 268.0,311.8 268.5,311.7 269.0,311.6 269.5,311.5 270.0,311.5 270.5,311.5 271.0,311.5 271.5,311.5 272.0,311.6 272.5,311.6 273.0,311.6 273.5,311.7 274.0,311.7 274.5,311.8 275.0,311.9 275.5,311.9 276.0,312.0 276.5,312.1 277.0,312.3 277.5,312.5 278.0,312.8 278.5,313.1 279.0,313.4 279.5,313.7 280.0,314.0 280.5,314.3 281.0,314.7 281.5,315.2 282.0,315.6 282.5,316.1 283.0,316.7 283.5,317.2 284.0,317.7 284.5,318.2 285.0,318.6 285.5,319.1 286.0,319.4 286.5,319.7 287.0,320.0 287.5,320.2 288.0,320.4 288.5,320.6 289.0,320.8 289.5,321.0 290.0,321.2 290.5,321.4 291.0,321.5 291.5,321.7 292.0,321.8 292.5,321.9 293.0,321.9 293.5,322.0 294.0,322.0 294.5,321.9 295.0,321.7 295.5,321.3 296.0,320.9 296.5,320.4 297.0,319.8 297.5,319.3 298.0,318.8 298.5,318.4 299.0,318.0 299.5,317.7 300.0,317.3 300.5,317.0 301.0,316.7 301.5,316.4 302.0,316.2 302.5,316.1 303.0,316.0 303.5,316.0 304.0,316.1 304.5,316.3 305.0,316.5 305.5,316.8 306.0,317.0 306.5,317.3 307.0,317.5 307.5,317.8 308.0,318.0 308.5,318.2 309.0,318.4 309.5,318.7 310.0,318.9 310.5,319.2 311.0,319.5 311.5,319.7 312.0,320.0 312.5,320.2 313.0,320.5 313.5,320.7 314.0,321.0 314.5,321.2 315.0,321.4 315.5,321.6 316.0,321.7 316.5,321.8 317.0,321.9 317.5,322.0 318.0,322.0 318.5,321.8 319.0,321.4 319.5,320.9 320.0,320.2 320.5,319.6 321.0,319.0 321.5,318.5 322.0,317.9 322.5,317.4 323.0,316.8 323.5,316.2 324.0,315.7 324.5,315.2 325.0,314.7 325.5,314.3 326.0,314.0 326.5,313.7 327.0,313.4 327.5,313.1 328.0,312.9 328.5,312.6 329.0,312.4 329.5,312.3 330.0,312.1 330.5,312.0 331.0,312.0 331.5,312.0 332.0,312.0 332.5,312.0 333.0,312.0 333.5,312.0 334.0,312.0 334.5,312.0 335.0,312.0 335.5,312.0 336.0,312.0 336.5,312.0 337.0,312.0 337.5,312.0 338.0,312.0 338.5,312.0 339.0,312.0 339.5,312.0 340.0,312.0 340.5,312.0 341.0,312.0 341.5,312.0 342.0,312.0 342.5,312.0 343.0,312.0 343.5,312.1 344.0,312.2 344.5,312.4 345.0,312.7 345.5,313.0 346.0,313.4 346.5,313.8 347.0,314.2 347.5,314.6 348.0,315.0 348.5,315.4 349.0,315.9 349.5,316.5 350.0,317.0 350.5,317.6 351.0,318.2 351.5,318.7 352.0,319.2 352.5,319.7 353.0,320.0 353.5,320.3 354.0,320.6 354.5,320.9 355.0,321.1 355.5,321.4 356.0,321.6 356.5,321.7 357.0,321.9 357.5,322.0 358.0,322.0 358.5,322.0 359.0,322.0 359.5,322.0 360.0,322.0 360.5,322.0 361.0,322.0 361.5,322.0 362.0,322.0 362.5,322.0 363.0,322.0 363.5,322.0 364.0,322.0 364.5,322.0 365.0,322.0 365.5,322.0 366.0,322.0 366.5,322.0 367.0,322.0 367.5,322.0 368.0,322.0 368.5,322.0 369.0,322.0 369.5,322.0 370.0,322.0 370.5,321.9 371.0,321.5 371.5,321.1 372.0,320.5 372.5,319.8 373.0,319.1 373.5,318.5 374.0,318.0 374.5,317.5 375.0,317.0 375.5,316.5 376.0,316.0 376.5,315.5 377.0,315.0 377.5,314.5 378.0,314.1 378.5,313.7 379.0,313.4 379.5,313.2 380.0,313.0 380.5,312.9 381.0,312.8 381.5,312.7 382.0,312.6 382.5,312.5 383.0,312.4 383.5,312.3 384.0,312.3 384.5,312.2 385.0,312.1 385.5,312.0 386.0,312.0 386.5,311.9 387.0,311.8 387.5,311.8 388.0,311.7 388.5,311.6 389.0,311.6 389.5,311.5 390.0,311.5 390.5,311.4 391.0,311.4 391.5,311.3 392.0,311.3 392.5,311.3 393.0,311.2 393.5,311.2 394.0,311.2 394.5,311.1 395.0,311.1 395.5,311.1 396.0,311.1 396.5,311.1 397.0,311.0 397.5,311.0 398.0,311.0 398.5,311.0 399.0,311.0 399.5,311.0 400.0,311.0 400.5,311.1 401.0,311.4 401.5,311.8 402.0,312.3 402.5,312.9 403.0,313.5 403.5,314.0 404.0,314.5 404.5,315.1 405.0,315.8 405.5,316.4 406.0,317.1 406.5,317.7 407.0,318.2 407.5,318.7 408.0,319.0 408.5,319.3 409.0,319.5 409.5,319.8 410.0,320.0 410.5,320.2 411.0,320.4 411.5,320.6 412.0,320.7 412.5,320.8 413.0,320.9 413.5,321.0 414.0,321.0 414.5,320.9 415.0,320.6 415.5,320.3 416.0,319.8 416.5,319.3 417.0,318.8 417.5,318.4 418.0,318.0 418.5,317.7 419.0,317.4 419.5,317.0 420.0,316.7 420.5,316.4 421.0,316.2 421.5,316.1 422.0,316.0 422.5,316.1 423.0,316.2 423.5,316.5 424.0,316.8 424.5,317.2 425.0,317.6 425.5,318.0 426.0,318.4 426.5,318.7 427.0,319.0 427.5,319.3 428.0,319.5 428.5,319.8 429.0,320.1 429.5,320.4 430.0,320.7 430.5,320.9 431.0,321.2 431.5,321.4 432.0,321.6 432.5,321.8 433.0,321.9 433.5,322.0 434.0,322.0 434.5,322.0 435.0,322.0 435.5,321.9 436.0,321.9 436.5,321.8 437.0,321.7 437.5,321.6 438.0,321.5 438.5,321.4 439.0,321.3 439.5,321.1 440.0,321.0 440.5,320.8 441.0,320.5 441.5,320.2 442.0,319.8 442.5,319.3 443.0,318.9 443.5,318.6 444.0,318.3 444.5,318.1 445.0,318.0 445.5,318.0 446.0,318.2 446.5,318.3 447.0,318.6 447.5,318.8 448.0,319.1 448.5,319.3 449.0,319.6 449.5,319.8 450.0,320.0 450.5,320.2 451.0,320.3 451.5,320.5 452.0,320.7 452.5,320.8 453.0,321.0 453.5,321.2 454.0,321.3 454.5,321.5 455.0,321.6 455.5,321.7 456.0,321.8 456.5,321.9 457.0,321.9 457.5,322.0 458.0,322.0 458.5,321.8 459.0,321.2 459.5,320.4 460.0,319.5 460.5,318.7 461.0,318.0 461.5,317.4 462.0,316.8 462.5,316.2 463.0,315.7 463.5,315.1 464.0,314.7 464.5,314.3 465.0,314.0 465.5,313.8 466.0,313.6 466.5,313.4 467.0,313.3 467.5,313.1 468.0,313.0 468.5,312.9 469.0,312.7 469.5,312.6 470.0,312.5 470.5,312.4 471.0,312.2 471.5,312.1 472.0,312.0 472.5,311.9 473.0,311.8 473.5,311.7 474.0,311.6 474.5,311.6 475.0,311.5 475.5,311.4 476.0,311.4 476.5,311.3 477.0,311.3 477.5,311.3 478.0,311.2 478.5,311.2 479.0,311.2 479.5,311.1 480.0,311.1 480.5,311.0 481.0,311.0" fill="none" stroke="#e8200a" stroke-width="1.1"/>
</g>
<g clip-path="url(#p2)">
<line x1="7" y1="343" x2="625" y2="343" stroke="#8b0a0a" stroke-width="1.5"/>
<line x1="7" y1="379.5" x2="625" y2="379.5" stroke="#806464" stroke-width="1" stroke-dasharray="2.5 3.2"/>
<line x1="7" y1="416" x2="625" y2="416" stroke="#0a7a0a" stroke-width="1.5"/>
<rect x="7" y="338" width="70" height="3.6" fill="#ff8000"/>
<rect x="77" y="338" width="86" height="3.6" fill="#ffeb00"/>
<rect x="163" y="338" width="107" height="3.6" fill="#ff8000"/>
<rect x="7" y="371" width="312" height="9" fill="#2e2c00"/>
<g fill="#f0ec10"><rect x="7" y="371" width="1" height="9"/><rect x="8" y="371" width="1" height="9"/><rect x="10" y="371" width="1" height="9"/><rect x="12" y="371" width="1" height="9"/><rect x="14" y="371" width="1" height="9"/><rect x="16" y="371" width="1" height="9"/><rect x="17" y="371" width="1" height="9"/><rect x="19" y="371" width="1" height="9"/><rect x="21" y="371" width="2" height="9"/><rect x="23" y="371" width="1" height="9"/><rect x="25" y="371" width="1" height="9"/><rect x="26" y="371" width="1" height="9"/><rect x="28" y="371" width="1" height="9"/><rect x="30" y="371" width="1" height="9"/><rect x="32" y="371" width="1" height="9"/><rect x="34" y="371" width="1" height="9"/><rect x="36" y="371" width="1" height="9"/><rect x="37" y="371" width="1" height="9"/><rect x="39" y="371" width="1" height="9"/><rect x="41" y="371" width="2" height="9"/><rect x="43" y="371" width="1" height="9"/><rect x="45" y="371" width="1" height="9"/><rect x="46" y="371" width="1" height="9"/><rect x="48" y="371" width="1" height="9"/><rect x="50" y="371" width="1" height="9"/><rect x="52" y="371" width="1" height="9"/><rect x="54" y="371" width="1" height="9"/><rect x="56" y="371" width="1" height="9"/><rect x="57" y="371" width="1" height="9"/><rect x="59" y="371" width="1" height="9"/><rect x="61" y="371" width="2" height="9"/><rect x="63" y="371" width="1" height="9"/><rect x="65" y="371" width="1" height="9"/><rect x="66" y="371" width="1" height="9"/><rect x="68" y="371" width="1" height="9"/><rect x="70" y="371" width="1" height="9"/><rect x="72" y="371" width="1" height="9"/><rect x="74" y="371" width="1" height="9"/><rect x="76" y="371" width="1" height="9"/><rect x="77" y="371" width="1" height="9"/><rect x="79" y="371" width="1" height="9"/><rect x="81" y="371" width="2" height="9"/><rect x="83" y="371" width="1" height="9"/><rect x="85" y="371" width="1" height="9"/><rect x="86" y="371" width="1" height="9"/><rect x="88" y="371" width="1" height="9"/><rect x="90" y="371" width="1" height="9"/><rect x="92" y="371" width="1" height="9"/><rect x="94" y="371" width="1" height="9"/><rect x="96" y="371" width="1" height="9"/><rect x="97" y="371" width="1" height="9"/><rect x="99" y="371" width="1" height="9"/><rect x="101" y="371" width="2" height="9"/><rect x="103" y="371" width="1" height="9"/><rect x="105" y="371" width="1" height="9"/><rect x="106" y="371" width="1" height="9"/><rect x="108" y="371" width="1" height="9"/><rect x="110" y="371" width="1" height="9"/><rect x="112" y="371" width="1" height="9"/><rect x="114" y="371" width="1" height="9"/><rect x="116" y="371" width="1" height="9"/><rect x="117" y="371" width="1" height="9"/><rect x="119" y="371" width="1" height="9"/><rect x="121" y="371" width="2" height="9"/><rect x="123" y="371" width="1" height="9"/><rect x="125" y="371" width="1" height="9"/><rect x="126" y="371" width="1" height="9"/><rect x="128" y="371" width="1" height="9"/><rect x="130" y="371" width="1" height="9"/><rect x="132" y="371" width="1" height="9"/><rect x="134" y="371" width="1" height="9"/><rect x="136" y="371" width="1" height="9"/><rect x="137" y="371" width="1" height="9"/><rect x="139" y="371" width="1" height="9"/><rect x="141" y="371" width="2" height="9"/><rect x="143" y="371" width="1" height="9"/><rect x="145" y="371" width="1" height="9"/><rect x="146" y="371" width="1" height="9"/><rect x="148" y="371" width="1" height="9"/><rect x="150" y="371" width="1" height="9"/><rect x="152" y="371" width="1" height="9"/><rect x="154" y="371" width="1" height="9"/><rect x="156" y="371" width="1" height="9"/><rect x="157" y="371" width="1" height="9"/><rect x="159" y="371" width="1" height="9"/><rect x="161" y="371" width="2" height="9"/><rect x="163" y="371" width="1" height="9"/><rect x="165" y="371" width="1" height="9"/><rect x="166" y="371" width="1" height="9"/><rect x="168" y="371" width="1" height="9"/><rect x="170" y="371" width="1" height="9"/><rect x="172" y="371" width="1" height="9"/><rect x="174" y="371" width="1" height="9"/><rect x="176" y="371" width="1" height="9"/><rect x="177" y="371" width="1" height="9"/><rect x="179" y="371" width="1" height="9"/><rect x="181" y="371" width="2" height="9"/><rect x="183" y="371" width="1" height="9"/><rect x="185" y="371" width="1" height="9"/><rect x="186" y="371" width="1" height="9"/><rect x="188" y="371" width="1" height="9"/><rect x="190" y="371" width="1" height="9"/><rect x="192" y="371" width="1" height="9"/><rect x="194" y="371" width="1" height="9"/><rect x="196" y="371" width="1" height="9"/><rect x="197" y="371" width="1" height="9"/><rect x="199" y="371" width="1" height="9"/><rect x="201" y="371" width="2" height="9"/><rect x="203" y="371" width="1" height="9"/><rect x="205" y="371" width="1" height="9"/><rect x="206" y="371" width="1" height="9"/><rect x="208" y="371" width="1" height="9"/><rect x="210" y="371" width="1" height="9"/><rect x="212" y="371" width="1" height="9"/><rect x="214" y="371" width="1" height="9"/><rect x="216" y="371" width="1" height="9"/><rect x="217" y="371" width="1" height="9"/><rect x="219" y="371" width="1" height="9"/><rect x="221" y="371" width="2" height="9"/><rect x="223" y="371" width="1" height="9"/><rect x="225" y="371" width="1" height="9"/><rect x="226" y="371" width="1" height="9"/><rect x="228" y="371" width="1" height="9"/><rect x="230" y="371" width="1" height="9"/><rect x="232" y="371" width="1" height="9"/><rect x="234" y="371" width="1" height="9"/><rect x="235" y="371" width="1" height="9"/><rect x="237" y="371" width="1" height="9"/><rect x="239" y="371" width="1" height="9"/><rect x="241" y="371" width="2" height="9"/><rect x="243" y="371" width="1" height="9"/><rect x="245" y="371" width="1" height="9"/><rect x="246" y="371" width="1" height="9"/><rect x="248" y="371" width="1" height="9"/><rect x="250" y="371" width="1" height="9"/><rect x="252" y="371" width="1" height="9"/><rect x="254" y="371" width="1" height="9"/><rect x="255" y="371" width="1" height="9"/><rect x="257" y="371" width="1" height="9"/><rect x="259" y="371" width="1" height="9"/><rect x="261" y="371" width="2" height="9"/><rect x="263" y="371" width="1" height="9"/><rect x="265" y="371" width="1" height="9"/><rect x="266" y="371" width="1" height="9"/><rect x="268" y="371" width="1" height="9"/><rect x="270" y="371" width="1" height="9"/><rect x="272" y="371" width="1" height="9"/><rect x="274" y="371" width="1" height="9"/><rect x="275" y="371" width="1" height="9"/><rect x="277" y="371" width="1" height="9"/><rect x="279" y="371" width="1" height="9"/><rect x="281" y="371" width="2" height="9"/><rect x="283" y="371" width="1" height="9"/><rect x="285" y="371" width="1" height="9"/><rect x="286" y="371" width="1" height="9"/><rect x="288" y="371" width="1" height="9"/><rect x="290" y="371" width="1" height="9"/><rect x="292" y="371" width="1" height="9"/><rect x="294" y="371" width="1" height="9"/><rect x="295" y="371" width="1" height="9"/><rect x="297" y="371" width="1" height="9"/><rect x="299" y="371" width="1" height="9"/><rect x="301" y="371" width="2" height="9"/><rect x="303" y="371" width="1" height="9"/><rect x="305" y="371" width="1" height="9"/><rect x="306" y="371" width="1" height="9"/><rect x="308" y="371" width="1" height="9"/><rect x="310" y="371" width="1" height="9"/><rect x="312" y="371" width="1" height="9"/><rect x="314" y="371" width="1" height="9"/><rect x="315" y="371" width="1" height="9"/><rect x="317" y="371" width="1" height="9"/></g><g fill="#8c8a0c"><rect x="18" y="371" width="2" height="9"/><rect x="45" y="371" width="2" height="9"/><rect x="56" y="371" width="2" height="9"/><rect x="83" y="371" width="2" height="9"/><rect x="94" y="371" width="2" height="9"/><rect x="122" y="371" width="2" height="9"/><rect x="132" y="371" width="2" height="9"/><rect x="160" y="371" width="2" height="9"/><rect x="171" y="371" width="2" height="9"/><rect x="198" y="371" width="2" height="9"/><rect x="209" y="371" width="2" height="9"/><rect x="236" y="371" width="2" height="9"/><rect x="247" y="371" width="2" height="9"/><rect x="274" y="371" width="2" height="9"/><rect x="285" y="371" width="2" height="9"/><rect x="312" y="371" width="2" height="9"/></g>
<rect x="319" y="373.7" width="81" height="6.3" fill="#4a2404"/>
<g fill="#f07a1e"><rect x="319" y="373.7" width="1" height="6.300000000000011"/><rect x="320" y="373.7" width="1" height="6.300000000000011"/><rect x="322" y="373.7" width="1" height="6.300000000000011"/><rect x="324" y="373.7" width="1" height="6.300000000000011"/><rect x="326" y="373.7" width="1" height="6.300000000000011"/><rect x="328" y="373.7" width="1" height="6.300000000000011"/><rect x="329" y="373.7" width="1" height="6.300000000000011"/><rect x="331" y="373.7" width="1" height="6.300000000000011"/><rect x="333" y="373.7" width="2" height="6.300000000000011"/><rect x="335" y="373.7" width="1" height="6.300000000000011"/><rect x="337" y="373.7" width="1" height="6.300000000000011"/><rect x="338" y="373.7" width="1" height="6.300000000000011"/><rect x="340" y="373.7" width="1" height="6.300000000000011"/><rect x="342" y="373.7" width="1" height="6.300000000000011"/><rect x="344" y="373.7" width="1" height="6.300000000000011"/><rect x="346" y="373.7" width="1" height="6.300000000000011"/><rect x="348" y="373.7" width="1" height="6.300000000000011"/><rect x="349" y="373.7" width="1" height="6.300000000000011"/><rect x="351" y="373.7" width="1" height="6.300000000000011"/><rect x="353" y="373.7" width="2" height="6.300000000000011"/><rect x="355" y="373.7" width="1" height="6.300000000000011"/><rect x="357" y="373.7" width="1" height="6.300000000000011"/><rect x="358" y="373.7" width="1" height="6.300000000000011"/><rect x="360" y="373.7" width="1" height="6.300000000000011"/><rect x="362" y="373.7" width="1" height="6.300000000000011"/><rect x="364" y="373.7" width="1" height="6.300000000000011"/><rect x="366" y="373.7" width="1" height="6.300000000000011"/><rect x="368" y="373.7" width="1" height="6.300000000000011"/><rect x="369" y="373.7" width="1" height="6.300000000000011"/><rect x="371" y="373.7" width="1" height="6.300000000000011"/><rect x="373" y="373.7" width="2" height="6.300000000000011"/><rect x="375" y="373.7" width="1" height="6.300000000000011"/><rect x="377" y="373.7" width="1" height="6.300000000000011"/><rect x="378" y="373.7" width="1" height="6.300000000000011"/><rect x="380" y="373.7" width="1" height="6.300000000000011"/><rect x="382" y="373.7" width="1" height="6.300000000000011"/><rect x="384" y="373.7" width="1" height="6.300000000000011"/><rect x="386" y="373.7" width="1" height="6.300000000000011"/><rect x="388" y="373.7" width="1" height="6.300000000000011"/><rect x="389" y="373.7" width="1" height="6.300000000000011"/><rect x="391" y="373.7" width="1" height="6.300000000000011"/><rect x="393" y="373.7" width="2" height="6.300000000000011"/><rect x="395" y="373.7" width="1" height="6.300000000000011"/><rect x="397" y="373.7" width="1" height="6.300000000000011"/><rect x="398" y="373.7" width="1" height="6.300000000000011"/></g>
<rect x="306" y="418" width="20" height="4" fill="#0a1aff"/>
<rect x="326" y="418" width="95" height="4" fill="#ff00ff"/>
<rect x="421" y="418" width="27" height="4" fill="#0a1aff"/>
<rect x="448" y="418" width="33" height="4" fill="#ff00ff"/>
<polyline points="7,343 78,343 90,353 100,363 115,380 133,396.7 150,406.7 166.7,411.7 186.7,415 200,416.5 270,416.5 279,413 283,408 288,405 295,404.5 303,405 311,408 318,411 328,413 338,415 357,416 388,416 396,403 401,392 405,379 410,370 415,358 421,355 427,350 439,345 449,344 464,343 481,343" fill="none" stroke="#bdbdbd" stroke-width="1" stroke-dasharray="3 3"/>
<polyline points="7.0,368.0 7.5,363.7 8.0,359.2 8.5,355.1 9.0,352.0 9.5,349.7 10.0,347.7 10.5,346.1 11.0,345.0 11.5,344.2 12.0,343.6 12.5,343.2 13.0,343.0 13.5,343.0 14.0,343.0 14.5,343.0 15.0,343.0 15.5,343.0 16.0,343.0 16.5,343.0 17.0,343.0 17.5,343.0 18.0,343.0 18.5,343.0 19.0,343.0 19.5,343.0 20.0,343.0 20.5,343.0 21.0,343.0 21.5,343.0 22.0,343.0 22.5,343.0 23.0,347.2 23.5,356.4 24.0,365.0 24.5,371.7 25.0,378.6 25.5,385.2 26.0,391.2 26.5,396.3 27.0,400.0 27.5,402.8 28.0,405.3 28.5,407.5 29.0,409.3 29.5,410.8 30.0,412.0 30.5,413.0 31.0,413.9 31.5,414.8 32.0,415.4 32.5,415.8 33.0,416.0 33.5,416.0 34.0,416.0 34.5,416.0 35.0,416.0 35.5,416.0 36.0,416.0 36.5,415.5 37.0,414.2 37.5,412.3 38.0,410.0 38.5,405.9 39.0,399.4 39.5,392.0 40.0,385.0 40.5,378.4 41.0,371.5 41.5,365.1 42.0,360.0 42.5,355.9 43.0,352.1 43.5,349.1 44.0,347.0 44.5,345.5 45.0,344.2 45.5,343.3 46.0,343.0 46.5,343.0 47.0,343.0 47.5,343.0 48.0,343.0 48.5,343.0 49.0,343.0 49.5,343.0 50.0,343.0 50.5,343.0 51.0,343.0 51.5,343.0 52.0,343.0 52.5,344.1 53.0,347.1 53.5,350.9 54.0,355.0 54.5,359.7 55.0,365.6 55.5,372.1 56.0,378.8 56.5,384.9 57.0,390.0 57.5,394.4 58.0,398.7 58.5,402.8 59.0,406.3 59.5,409.1 60.0,411.0 60.5,412.3 61.0,413.5 61.5,414.5 62.0,415.3 62.5,415.8 63.0,416.0 63.5,416.0 64.0,416.0 64.5,416.0 65.0,416.0 65.5,416.0 66.0,416.0 66.5,416.0 67.0,416.0 67.5,416.0 68.0,416.0 68.5,416.0 69.0,416.0 69.5,416.0 70.0,416.0 70.5,414.5 71.0,410.7 71.5,405.6 72.0,400.0 72.5,392.6 73.0,382.7 73.5,372.8 74.0,365.0 74.5,359.2 75.0,353.8 75.5,349.6 76.0,347.0 76.5,345.5 77.0,344.2 77.5,343.3 78.0,343.0 78.5,343.0 79.0,343.0 79.5,343.0 80.0,343.0 80.5,343.0 81.0,343.0 81.5,343.0 82.0,343.0 82.5,344.7 83.0,348.9 83.5,354.5 84.0,360.0 84.5,366.0 85.0,373.4 85.5,381.2 86.0,388.8 86.5,395.3 87.0,400.0 87.5,403.4 88.0,406.4 88.5,409.2 89.0,411.4 89.5,413.0 90.0,414.0 90.5,414.6 91.0,415.0 91.5,415.4 92.0,415.7 92.5,415.9 93.0,416.0 93.5,415.9 94.0,415.8 94.5,415.5 95.0,415.1 95.5,414.6 96.0,414.0 96.5,411.6 97.0,406.8 97.5,400.8 98.0,395.0 98.5,389.3 99.0,382.9 99.5,376.2 100.0,369.9 100.5,364.3 101.0,360.0 101.5,356.5 102.0,353.3 102.5,350.3 103.0,347.9 103.5,346.0 104.0,345.0 104.5,344.4 105.0,344.0 105.5,343.6 106.0,343.3 106.5,343.1 107.0,343.0 107.5,343.0 108.0,343.0 108.5,343.0 109.0,343.0 109.5,343.0 110.0,343.0 110.5,343.0 111.0,343.0 111.5,343.0 112.0,343.0 112.5,344.6 113.0,348.6 113.5,354.1 114.0,360.0 114.5,367.6 115.0,377.5 115.5,387.4 116.0,395.0 116.5,400.7 117.0,405.9 117.5,409.9 118.0,412.0 118.5,412.8 119.0,413.4 119.5,413.9 120.0,414.0 120.6,408.2 121.1,395.9 121.7,385.0 122.3,377.5 122.9,371.0 123.5,365.0 124.0,359.7 124.5,354.3 125.0,349.8 125.5,347.0 126.0,345.5 126.5,344.2 127.0,343.3 127.5,343.0 128.0,343.0 128.5,343.0 129.0,343.0 129.5,343.0 130.0,343.0 130.5,343.0 131.0,343.0 131.5,343.0 132.0,343.0 132.5,343.0 133.0,343.0 133.5,343.0 134.0,343.0 134.5,344.7 135.0,348.9 135.5,354.5 136.0,360.0 136.5,366.0 137.0,373.4 137.5,381.2 138.0,388.8 138.5,395.3 139.0,400.0 139.5,403.4 140.0,406.4 140.5,409.2 141.0,411.4 141.5,413.0 142.0,414.0 142.5,414.6 143.0,415.0 143.5,415.4 144.0,415.7 144.5,415.9 145.0,416.0 145.5,416.0 146.0,415.9 146.5,415.8 147.0,415.7 147.5,415.6 148.0,415.3 148.5,415.1 149.0,414.8 149.5,414.4 150.0,414.0 150.5,411.9 151.0,407.4 151.5,401.3 152.0,395.0 152.5,387.1 153.0,377.0 153.5,367.3 154.0,360.0 154.5,354.9 155.0,350.3 155.5,346.9 156.0,345.0 156.5,344.2 157.0,343.6 157.5,343.1 158.0,343.0 158.5,343.0 159.0,343.0 159.5,343.0 160.0,343.0 160.5,343.0 161.0,343.0 161.5,343.0 162.0,343.0 162.5,343.0 163.0,343.0 163.5,343.0 164.0,343.0 164.5,343.0 165.0,343.0 165.5,343.0 166.0,343.0 166.5,345.2 167.0,350.7 167.5,357.9 168.0,365.0 168.5,373.1 169.0,382.6 169.5,391.7 170.0,398.0 170.5,402.2 171.0,405.6 171.5,407.0 172.0,405.7 172.5,402.3 173.0,398.0 173.5,390.6 174.0,379.5 174.5,368.1 175.0,360.0 175.5,354.7 176.0,350.1 176.5,346.6 177.0,345.0 177.5,344.5 178.0,344.1 178.5,343.8 179.0,343.5 179.5,343.3 180.0,343.1 180.5,343.0 181.0,343.0 181.5,344.6 182.0,348.6 182.5,354.1 183.0,360.0 183.5,367.7 184.0,377.6 184.5,387.5 185.0,395.0 185.5,400.6 186.0,405.7 186.5,409.5 187.0,411.0 187.5,410.0 188.0,407.4 188.5,403.9 189.0,400.0 189.5,394.7 190.0,387.5 190.5,380.3 191.0,375.0 191.5,371.1 192.0,367.6 192.5,365.0 193.0,364.0 193.5,366.3 194.0,371.8 194.5,378.6 195.0,385.0 195.5,391.1 196.0,397.8 196.5,403.8 197.0,408.0 197.5,410.9 198.0,413.5 198.5,415.3 199.0,416.0 199.5,416.0 200.0,416.0 200.5,416.0 201.0,416.0 201.5,416.0 202.0,416.0 202.5,416.0 203.0,416.0 203.5,416.0 204.0,416.0 204.5,416.0 205.0,416.0 205.5,416.0 206.0,416.0 206.5,416.0 207.0,416.0 207.5,416.0 208.0,416.0 208.5,416.0 209.0,416.0 209.5,416.0 210.0,416.0 210.5,416.0 211.0,416.0 211.5,416.0 212.0,416.0 212.5,416.0 213.0,416.0 213.5,416.0 214.0,416.0 214.5,416.0 215.0,416.0 215.5,413.9 216.0,408.8 216.5,402.0 217.0,395.0 217.5,386.8 218.0,376.8 218.5,367.2 219.0,360.0 219.5,354.9 220.0,350.3 220.5,346.9 221.0,345.0 221.5,344.2 222.0,343.6 222.5,343.1 223.0,343.0 223.5,343.0 224.0,343.0 224.5,343.0 225.0,343.0 225.5,343.0 226.0,343.0 226.5,343.0 227.0,343.0 227.5,343.0 228.0,343.0 228.5,343.0 229.0,343.0 229.5,343.0 230.0,343.0 230.5,343.0 231.0,343.0 231.5,344.6 232.0,348.6 232.5,354.1 233.0,360.0 233.5,367.6 234.0,377.5 234.5,387.4 235.0,395.0 235.5,400.6 236.0,405.8 236.5,409.7 237.0,412.0 237.5,413.1 238.0,414.1 238.5,414.9 239.0,415.5 239.5,415.9 240.0,416.0 240.5,416.0 241.0,416.0 241.5,416.0 242.0,416.0 242.5,416.0 243.0,416.0 243.5,416.0 244.0,416.0 244.5,416.0 245.0,416.0 245.5,416.0 246.0,416.0 246.5,416.0 247.0,416.0 247.5,414.3 248.0,409.9 248.5,404.1 249.0,398.0 249.5,390.5 250.0,380.9 250.5,371.7 251.0,365.0 251.5,360.4 252.0,356.3 252.5,352.6 253.0,349.6 253.5,347.4 254.0,346.0 254.5,345.2 255.0,344.5 255.5,343.9 256.0,343.4 256.5,343.1 257.0,343.0 257.5,343.0 258.0,343.0 258.5,343.0 259.0,343.0 259.5,343.0 260.0,343.0 260.5,343.0 261.0,343.0 261.5,343.0 262.0,343.0 262.5,343.0 263.0,343.0 263.5,343.0 264.0,343.0 264.5,343.0 265.0,343.0 265.5,343.0 266.0,343.0 266.5,343.0 267.0,343.0 267.5,343.0 268.0,343.0 268.5,343.0 269.0,343.0 269.5,343.0 270.0,343.0 270.5,343.0 271.0,343.0 271.5,343.0 272.0,343.0 272.5,344.5 273.0,348.5 273.5,354.0 274.0,360.0 274.5,368.6 275.0,380.4 275.5,392.0 276.0,400.0 276.5,405.0 277.0,409.3 277.5,412.4 278.0,414.0 278.5,414.6 279.0,415.1 279.5,415.5 280.0,415.8 280.5,415.9 281.0,416.0 281.5,416.0 282.0,416.0 282.5,416.0 283.0,416.0 283.5,416.0 284.0,416.0 284.5,416.0 285.0,416.0 285.5,416.0 286.0,416.0 286.5,416.0 287.0,416.0 287.5,416.0 288.0,416.0 288.5,416.0 289.0,416.0 289.5,416.0 290.0,416.0 290.5,414.6 291.0,410.9 291.5,405.7 292.0,400.0 292.5,391.6 293.0,379.9 293.5,368.2 294.0,360.0 294.5,354.8 295.0,350.2 295.5,346.8 296.0,345.0 296.5,344.2 297.0,343.6 297.5,343.1 298.0,343.0 298.5,343.0 299.0,343.0 299.5,343.0 300.0,343.0 300.5,343.0 301.0,343.0 301.5,343.0 302.0,343.0 302.5,343.0 303.0,343.0 303.5,344.7 304.0,349.1 304.5,354.6 305.0,360.0 305.5,365.4 306.0,371.7 306.5,378.3 307.0,384.7 307.5,390.4 308.0,395.0 308.5,398.7 309.0,402.3 309.5,405.5 310.0,408.3 310.5,410.5 311.0,412.0 311.5,413.1 312.0,414.1 312.5,414.7 313.0,415.0 313.5,414.9 314.0,414.7 314.5,414.4 315.0,414.0 315.5,412.9 316.0,410.8 316.5,408.1 317.0,405.0 317.5,401.3 318.0,396.6 318.5,391.1 319.0,385.0 319.5,377.0 320.0,367.7 320.5,360.0 321.0,354.0 321.5,348.9 322.0,346.0 322.5,344.8 323.0,343.8 323.5,343.2 324.0,343.0 324.5,343.0 325.0,343.0 325.5,343.0 326.0,343.0 326.5,343.0 327.0,343.0 327.5,343.0 328.0,343.0 328.5,343.0 329.0,343.0 329.5,343.0 330.0,343.0 330.5,343.0 331.0,343.0 331.5,343.0 332.0,343.0 332.5,344.3 333.0,347.5 333.5,352.0 334.1,362.8 334.6,375.0 335.2,383.1 335.8,390.1 336.4,395.7 337.0,400.0 337.5,402.8 338.0,405.4 338.5,407.7 339.0,409.6 339.5,411.0 340.0,412.0 340.5,412.7 341.0,413.3 341.5,413.9 342.0,414.4 342.5,414.9 343.0,415.3 343.5,415.6 344.0,415.8 344.5,416.0 345.0,416.0 345.5,416.0 346.0,416.0 346.5,416.0 347.0,416.0 347.5,416.0 348.0,416.0 348.5,414.5 349.0,410.6 349.5,405.4 350.0,400.0 350.5,393.3 351.0,384.8 351.5,376.4 352.0,370.0 352.5,365.3 353.0,361.1 353.5,357.8 354.0,356.0 354.5,355.2 355.0,354.6 355.5,354.1 356.0,354.0 356.5,354.7 357.0,356.4 357.5,359.0 358.0,362.0 358.5,367.2 359.0,375.1 359.5,383.4 360.0,390.0 360.5,394.9 361.0,399.7 361.5,404.0 362.0,407.7 362.5,410.4 363.0,412.0 363.5,412.8 364.0,413.6 364.5,414.2 365.0,414.6 365.5,414.9 366.0,415.0 366.5,413.5 367.0,409.9 367.5,405.0 368.0,400.0 368.5,394.4 369.0,387.5 369.5,380.0 370.0,372.5 370.5,365.6 371.0,360.0 371.5,355.2 372.0,350.6 372.5,347.0 373.0,345.0 373.5,344.2 374.0,343.6 374.5,343.1 375.0,343.0 375.5,343.0 376.0,343.0 376.5,343.0 377.0,343.0 377.5,343.0 378.0,343.0 378.5,343.0 379.0,343.0 379.5,344.7 380.0,348.9 380.5,354.5 381.0,360.0 381.5,366.0 382.0,373.4 382.5,381.2 383.0,388.8 383.5,395.3 384.0,400.0 384.5,403.4 385.0,406.6 385.5,409.4 386.0,411.6 386.5,413.2 387.0,414.0 387.5,414.3 388.0,414.5 388.5,414.7 389.0,414.9 389.5,415.0 390.0,415.0 390.5,413.5 391.0,409.9 391.5,405.0 392.0,400.0 392.5,394.3 393.0,387.1 393.5,379.2 394.0,371.5 394.5,364.8 395.0,360.0 395.5,356.5 396.0,353.2 396.5,350.4 397.0,348.0 397.5,346.2 398.0,345.0 398.5,344.2 399.0,343.6 399.5,343.2 400.0,343.0 400.5,343.0 401.0,343.0 401.5,343.0 402.0,343.0 402.5,344.5 403.0,348.2 403.5,353.1 404.0,358.0 404.5,363.4 405.0,369.9 405.5,376.9 406.0,383.9 406.5,390.1 407.0,395.0 407.5,399.1 408.0,403.0 408.5,406.6 409.0,409.6 409.5,411.8 410.0,413.0 410.5,413.6 411.0,414.1 411.5,414.4 412.0,414.7 412.5,414.9 413.0,415.0 413.5,414.4 414.0,412.9 414.5,410.5 415.0,407.5 415.5,403.9 416.0,400.0 416.5,393.4 417.0,383.6 417.5,373.2 418.0,365.0 418.5,358.8 419.0,353.1 419.5,348.5 420.0,346.0 420.5,344.8 421.0,343.9 421.5,343.2 422.0,343.0 422.5,343.6 423.0,345.0 423.5,350.7 424.0,362.0 424.5,374.7 425.0,385.0 425.5,392.8 426.0,400.1 426.5,406.2 427.0,410.0 427.5,412.3 428.0,414.2 428.5,415.5 429.0,416.0 429.5,416.0 430.0,416.0 430.5,416.0 431.0,416.0 431.5,416.0 432.0,416.0 432.5,416.0 433.0,416.0 433.5,414.5 434.0,410.7 434.5,405.6 435.0,400.0 435.5,392.5 436.0,382.6 436.5,372.7 437.0,365.0 437.5,359.5 438.0,354.6 438.5,350.7 439.0,348.0 439.5,346.1 440.0,344.5 440.5,343.4 441.0,343.0 441.5,343.0 442.0,343.0 442.5,343.0 443.0,343.0 443.5,343.0 444.0,343.0 444.5,344.6 445.0,348.6 445.5,354.0 446.0,360.0 446.5,368.2 447.0,379.2 447.5,390.1 448.0,398.0 448.5,403.2 449.0,407.7 449.5,411.1 450.0,413.0 450.5,413.9 451.0,414.6 451.5,415.2 452.0,415.6 452.5,415.9 453.0,416.0 453.5,416.0 454.0,416.0 454.5,416.0 455.0,416.0 455.5,416.0 456.0,416.0 456.5,416.0 457.0,416.0 457.5,416.0 458.0,416.0 458.5,414.0 459.0,408.9 459.5,402.2 460.0,395.0 460.5,385.7 461.0,373.7 461.5,362.4 462.0,355.0 462.5,350.9 463.0,347.6 463.5,345.2 464.0,344.0 464.5,343.6 465.0,343.3 465.5,343.1 466.0,343.0 466.5,343.0 467.0,343.0 467.5,343.0 468.0,343.0 468.5,343.0 469.0,343.0 469.5,343.0 470.0,343.0 470.5,343.0 471.0,343.0 471.5,343.0 472.0,343.0 472.5,343.0 473.0,343.0 473.5,343.0 474.0,343.0 474.5,343.0 475.0,343.0 475.5,344.6 476.0,348.6 476.5,354.1 477.0,360.0 477.5,367.7 478.0,377.6 478.5,387.5 479.0,395.0 479.5,399.8 480.0,403.7 480.5,407.3 481.0,411.0" fill="none" stroke="#c81010" stroke-width="1.3" stroke-linejoin="round"/>
</g>
<g>
<line x1="277" y1="308" x2="277" y2="430" stroke="#b8a42a" stroke-width="1.4"/>
<line x1="319" y1="308" x2="319" y2="430" stroke="#2f6bff" stroke-width="1.2" stroke-dasharray="2 1.8"/>
<line x1="359" y1="308" x2="359" y2="430" stroke="#2f6bff" stroke-width="1.2" stroke-dasharray="2 1.8"/>
<line x1="400.5" y1="308" x2="400.5" y2="430" stroke="#2f6bff" stroke-width="1.2" stroke-dasharray="2 1.8"/>
<line x1="440.5" y1="308" x2="440.5" y2="430" stroke="#ff9800" stroke-width="1.2" stroke-dasharray="2 1.8"/>
<line x1="482.5" y1="308" x2="482.5" y2="430" stroke="#2f6bff" stroke-width="1.2" stroke-dasharray="2 1.8"/>
<line x1="520.5" y1="308" x2="520.5" y2="430" stroke="#2f6bff" stroke-width="1.2" stroke-dasharray="2 1.8"/>
<line x1="562.5" y1="308" x2="562.5" y2="430" stroke="#2f6bff" stroke-width="1.2" stroke-dasharray="2 1.8"/>
<line x1="602.5" y1="308" x2="602.5" y2="430" stroke="#ff4040" stroke-width="1.2" stroke-dasharray="7 7" stroke-dashoffset="5.6"/>
</g>
</svg>
<div style="position:absolute;left:626px;top:19px;width:56px;height:17.5px;border:1px solid #2e2e2e;border-radius:4px;background:#121212"></div>
<div class="tx" style="left:631.49px;top:261.32px;font-size:11.1px;font-weight:400;color:#ffffff;transform:scaleX(1.0244);-webkit-text-stroke:0.3px #ffffff">50  000,0</div>
<div class="box" style="top:166px;width:55px;height:30px;background:#787b86"></div>
<div class="box" style="top:201px;width:53px;height:16px;background:#ff1010"></div>
<div class="box" style="top:249px;width:53px;height:16px;background:#00bcd4"></div>
<svg width="30" height="20" style="position:absolute;left:0;top:463px" viewBox="0 463 30 20"><path d="M7.9 470H15.3V479H11.7V473.8H7.9Z M22 470H26.9L23.1 479H19Z" fill="#ececec"/><circle cx="18.4" cy="471.8" r="1.8" fill="#ececec"/></svg>
<div class="tx" style="left:6.59px;top:5.86px;font-size:8.8px;font-weight:400;color:#e4e4e4;transform:scaleX(0.8596)">donatakkluk создал(а) график на TradingView.com, Фев 19, 2026 15:31 UTC+3</div><div class="tx" style="left:11.24px;top:22.62px;font-size:7.9px;font-weight:400;color:#e0e0e0;transform:scaleX(0.9113);-webkit-text-stroke:0.35px #e0e0e0">BTCUSDT.P · 1Д · Binance</div><div class="tx" style="left:103.27px;top:22.62px;font-size:7.9px;font-weight:400;color:#e0e0e0;transform:scaleX(0.9136);-webkit-text-stroke:0.35px #e0e0e0">ОТКР</div><div class="tx" style="left:122.26px;top:22.91px;font-size:7.56px;font-weight:400;color:#9a9a9a;transform:scaleX(0.9679)">66  422,8</div><div class="tx" style="left:154.16px;top:22.62px;font-size:7.9px;font-weight:400;color:#e0e0e0;transform:scaleX(0.8753);-webkit-text-stroke:0.35px #e0e0e0">МАКС</div><div class="tx" style="left:173.46px;top:22.91px;font-size:7.56px;font-weight:400;color:#9a9a9a;transform:scaleX(0.9664)">67  299,4</div><div class="tx" style="left:205.53px;top:22.62px;font-size:7.9px;font-weight:400;color:#e0e0e0;transform:scaleX(0.9412);-webkit-text-stroke:0.35px #e0e0e0">МИН</div><div class="tx" style="left:222.27px;top:22.91px;font-size:7.56px;font-weight:400;color:#9a9a9a;transform:scaleX(0.9381)">66  272,4</div><div class="tx" style="left:254.59px;top:22.62px;font-size:7.9px;font-weight:400;color:#e0e0e0;transform:scaleX(0.8312);-webkit-text-stroke:0.35px #e0e0e0">ЗАКР</div><div class="tx" style="left:271.05px;top:22.91px;font-size:7.56px;font-weight:400;color:#9a9a9a;transform:scaleX(1.0107)">66  624,5</div><div class="tx" style="left:304.36px;top:22.91px;font-size:7.56px;font-weight:400;color:#9a9a9a;transform:scaleX(0.9525)">+201,7 (+0,30%)</div><div class="tx" style="left:631.80px;top:23.30px;font-size:8.4px;font-weight:400;color:#d8d8d8;transform:scaleX(0.8000)">USDT</div><div class="tx" style="left:631.49px;top:38.12px;font-size:11.1px;font-weight:400;color:#ffffff;transform:scaleX(1.0195);-webkit-text-stroke:0.3px #ffffff">90  000,0</div><div class="tx" style="left:631.49px;top:93.92px;font-size:11.1px;font-weight:400;color:#ffffff;transform:scaleX(1.0171);-webkit-text-stroke:0.3px #ffffff">80  000,0</div><div class="tx" style="left:631.79px;top:149.72px;font-size:11.1px;font-weight:400;color:#ffffff;transform:scaleX(1.0171);-webkit-text-stroke:0.3px #ffffff">70  000,0</div><div class="tx" style="left:631.79px;top:169.12px;font-size:11.1px;font-weight:400;color:#ffffff;transform:scaleX(1.0171);-webkit-text-stroke:0.3px #ffffff">66  624,5</div><div class="tx" style="left:631.81px;top:181.22px;font-size:11.1px;font-weight:400;color:#f0f0f0;transform:scaleX(1.0521);-webkit-text-stroke:0.3px #f0f0f0">11:28:33</div><div class="tx" style="left:631.49px;top:204.02px;font-size:11.1px;font-weight:400;color:#ffffff;transform:scaleX(1.0244);-webkit-text-stroke:0.3px #ffffff">60  409,2</div><div class="tx" style="left:632.10px;top:251.22px;font-size:11.1px;font-weight:400;color:#000000;transform:scaleX(1.0098);-webkit-text-stroke:0.3px #000000">51  803,0</div><div class="tx" style="left:631.38px;top:315.80px;font-size:11.6px;font-weight:400;color:#ffffff;transform:scaleX(1.0426);-webkit-text-stroke:0.3px #ffffff">0.0</div><div class="tx" style="left:631.24px;top:336.00px;font-size:11.6px;font-weight:400;color:#ffffff;transform:scaleX(1.0090);-webkit-text-stroke:0.3px #ffffff">100,0</div><div class="tx" style="left:631.16px;top:373.20px;font-size:11.6px;font-weight:400;color:#ffffff;transform:scaleX(1.0754);-webkit-text-stroke:0.3px #ffffff">0,0</div><div class="tx" style="left:631.82px;top:410.90px;font-size:11.6px;font-weight:400;color:#ffffff;transform:scaleX(0.9657);-webkit-text-stroke:0.3px #ffffff">−100,0</div><div class="tx" style="left:45.21px;top:437.62px;font-size:11.1px;font-weight:400;color:#e6e6e6;transform:scaleX(1.0571);-webkit-text-stroke:0.3px #e6e6e6">Июл</div><div class="tx" style="left:104.60px;top:437.62px;font-size:11.1px;font-weight:400;color:#e6e6e6;transform:scaleX(1.0000);-webkit-text-stroke:0.3px #e6e6e6">Авг</div><div class="tx" style="left:159.50px;top:437.62px;font-size:11.1px;font-weight:400;color:#e6e6e6;transform:scaleX(1.0000);-webkit-text-stroke:0.3px #e6e6e6">Сен</div><div class="tx" style="left:214.29px;top:437.62px;font-size:11.1px;font-weight:400;color:#e6e6e6;transform:scaleX(1.0278);-webkit-text-stroke:0.3px #e6e6e6">Окт</div><div class="tx" style="left:270.22px;top:437.62px;font-size:11.1px;font-weight:400;color:#e6e6e6;transform:scaleX(1.0347);-webkit-text-stroke:0.3px #e6e6e6">Ноя</div><div class="tx" style="left:324.40px;top:437.62px;font-size:11.1px;font-weight:400;color:#e6e6e6;transform:scaleX(1.1297);-webkit-text-stroke:0.3px #e6e6e6">Дек</div><div class="tx" style="left:378.33px;top:437.62px;font-size:11.1px;font-weight:700;color:#ffffff;transform:scaleX(1.0792)">2026</div><div class="tx" style="left:437.17px;top:437.62px;font-size:11.1px;font-weight:400;color:#e6e6e6;transform:scaleX(1.0513);-webkit-text-stroke:0.3px #e6e6e6">Фев</div><div class="tx" style="left:487.43px;top:437.62px;font-size:11.1px;font-weight:400;color:#e6e6e6;transform:scaleX(1.0244);-webkit-text-stroke:0.3px #e6e6e6">Мар</div><div class="tx" style="left:545.40px;top:437.62px;font-size:11.1px;font-weight:400;color:#e6e6e6;transform:scaleX(1.0182);-webkit-text-stroke:0.3px #e6e6e6">Апр</div><div class="tx" style="left:598.01px;top:437.62px;font-size:11.1px;font-weight:400;color:#e6e6e6;transform:scaleX(1.0568);-webkit-text-stroke:0.3px #e6e6e6">Май</div><div class="tx" style="left:31.30px;top:468.01px;font-size:12.65px;font-weight:700;color:#e6e6e6;transform:scaleX(1.0303)">TradingView</div>
</body></html>
